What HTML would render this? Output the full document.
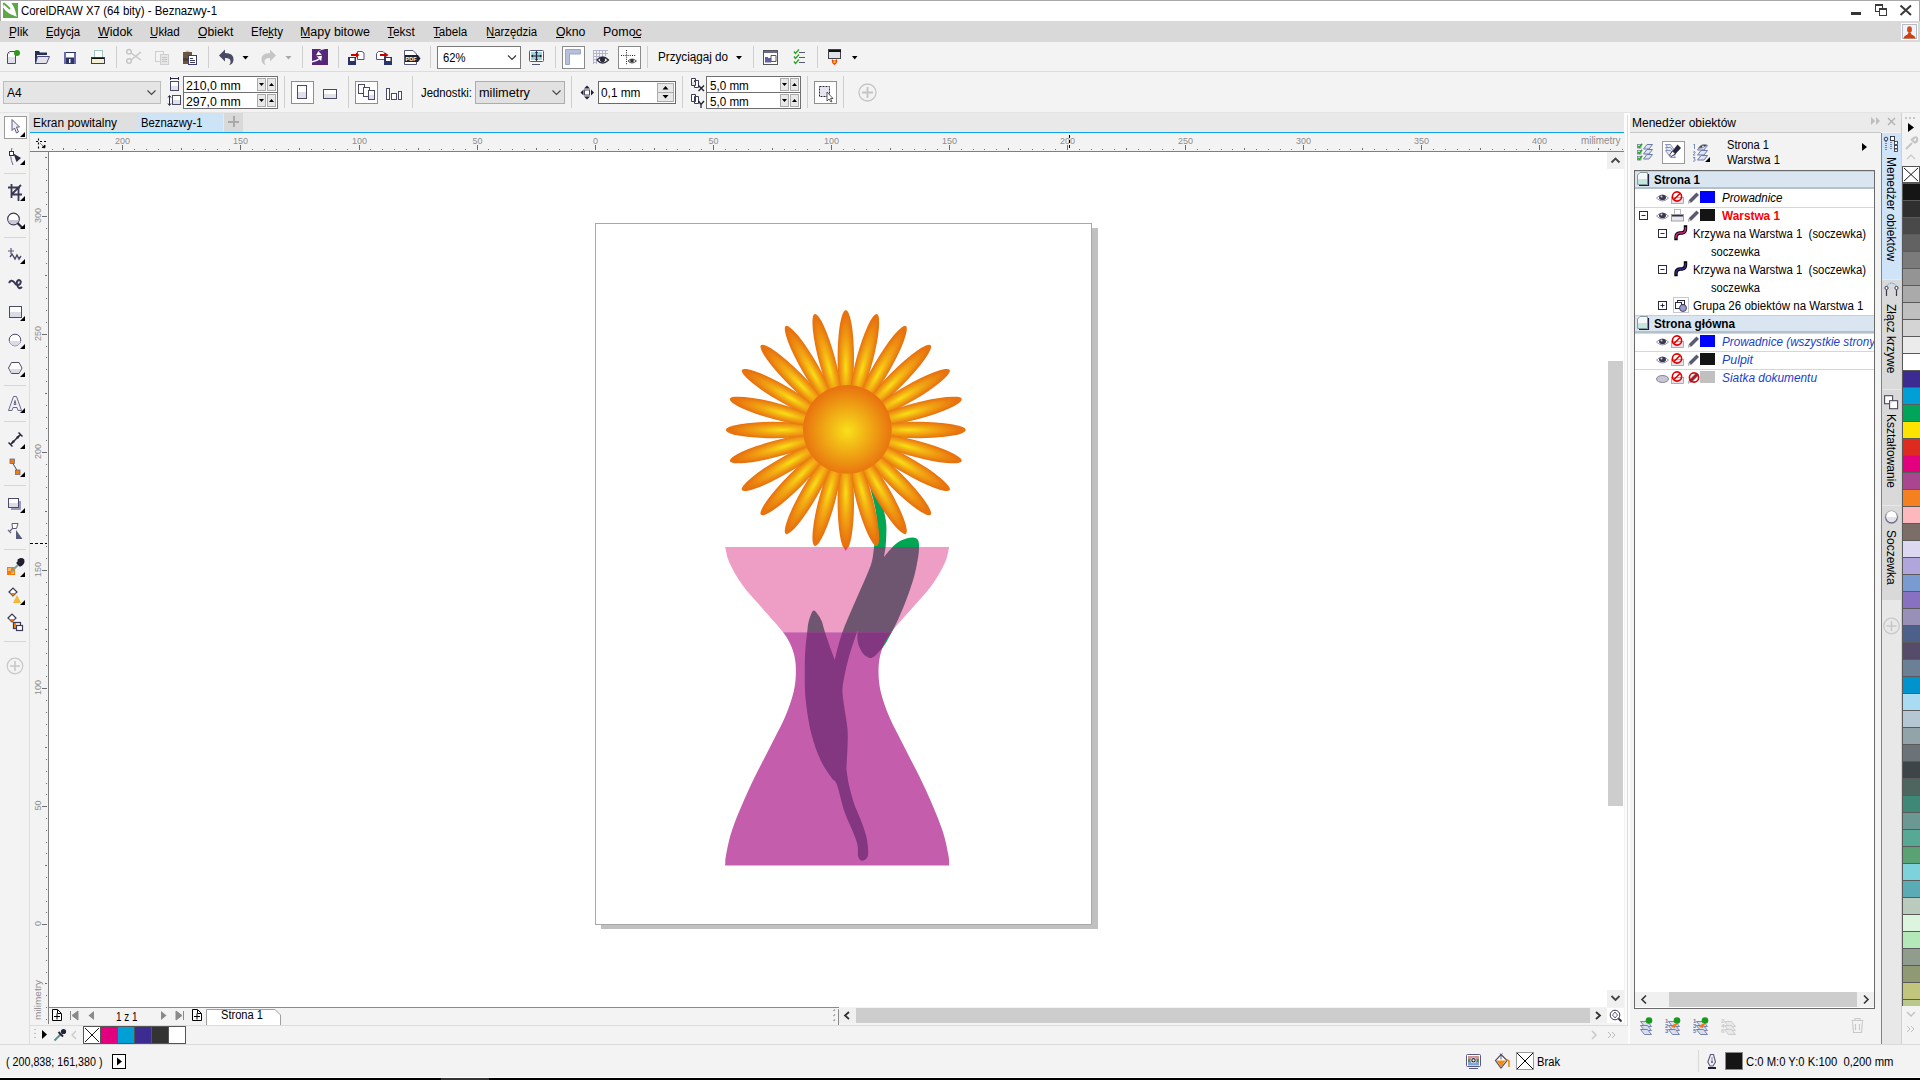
<!DOCTYPE html><html><head><meta charset="utf-8"><style>
*{margin:0;padding:0;box-sizing:border-box}
html,body{width:1920px;height:1080px;overflow:hidden;background:#f3f3f3;font-family:"Liberation Sans",sans-serif;position:relative}
.t{position:absolute;white-space:nowrap;line-height:1}
.a{position:absolute}
svg{position:absolute;overflow:visible}
</style></head><body><div style="position:absolute;left:0px;top:0px;width:1920px;height:21px;background:#fff;border-top:1px solid #a9a9a9"></div>
<div style="position:absolute;left:0px;top:0px;width:1px;height:21px;background:#a9a9a9"></div>
<svg style="left:3px;top:3px" width="15" height="15"><rect width="15" height="15" fill="#5aa846"/><path d="M0 4.5 L1 0 L8.5 0 Q11 4 12 7 L13.8 13.8 L7 11 Q3 9 0 4.5 Z" fill="#fff"/><path d="M1 0.5 L6.5 5.5" stroke="#5aa846" stroke-width="1.8" stroke-linecap="round"/><path d="M0 0 H1 L0 1 Z" fill="#5aa846"/></svg>
<div class="t" style="left:21px;top:5px;font-size:12px;color:#000;transform:scaleX(0.9532);transform-origin:0 0;">CorelDRAW X7 (64 bity) - Beznazwy-1</div>
<div style="position:absolute;left:1919px;top:0px;width:1px;height:21px;background:#a9a9a9"></div>
<div style="position:absolute;left:1851px;top:12px;width:10px;height:3px;background:#333"></div>
<svg style="left:1875px;top:4px" width="13" height="13"><rect x="0.5" y="0.5" width="7" height="7" fill="#fff" stroke="#3a3a3a"/><rect x="0" y="0" width="8" height="2" fill="#3a3a3a"/><rect x="4.5" y="4.5" width="7" height="7" fill="#fff" stroke="#3a3a3a"/><rect x="4" y="4" width="8" height="2" fill="#3a3a3a"/></svg>
<svg style="left:1899px;top:4px" width="14" height="12"><path d="M1.5 1.5 L12 11 M12 1.5 L1.5 11" stroke="#3a3a3a" stroke-width="2"/></svg>
<div style="position:absolute;left:0px;top:21px;width:1920px;height:21px;background:#d9d9d9"></div>
<div class="t" style="left:8.8px;top:26px;font-size:12px;color:#000;transform:scaleX(0.9981);transform-origin:0 0;">Plik</div>
<div class="t" style="left:45.5px;top:26px;font-size:12px;color:#000;transform:scaleX(0.9495);transform-origin:0 0;">Edycja</div>
<div class="t" style="left:97.5px;top:26px;font-size:12px;color:#000;transform:scaleX(1.0348);transform-origin:0 0;">Widok</div>
<div class="t" style="left:149.70000000000002px;top:26px;font-size:12px;color:#000;transform:scaleX(0.9681);transform-origin:0 0;">Układ</div>
<div class="t" style="left:197.5px;top:26px;font-size:12px;color:#000;transform:scaleX(1.0178);transform-origin:0 0;">Obiekt</div>
<div class="t" style="left:250.70000000000002px;top:26px;font-size:12px;color:#000;transform:scaleX(0.9626);transform-origin:0 0;">Efekty</div>
<div class="t" style="left:300.2px;top:26px;font-size:12px;color:#000;transform:scaleX(1.0376);transform-origin:0 0;">Mapy bitowe</div>
<div class="t" style="left:387.29999999999995px;top:26px;font-size:12px;color:#000;transform:scaleX(0.9890);transform-origin:0 0;">Tekst</div>
<div class="t" style="left:433.4px;top:26px;font-size:12px;color:#000;transform:scaleX(0.9700);transform-origin:0 0;">Tabela</div>
<div class="t" style="left:486.4px;top:26px;font-size:12px;color:#000;transform:scaleX(0.9440);transform-origin:0 0;">Narzędzia</div>
<div class="t" style="left:555.6px;top:26px;font-size:12px;color:#000;transform:scaleX(1.0250);transform-origin:0 0;">Okno</div>
<div class="t" style="left:602.6px;top:26px;font-size:12px;color:#000;transform:scaleX(1.0389);transform-origin:0 0;">Pomoc</div>
<div style="position:absolute;left:9px;top:37px;width:6px;height:1px;background:#000"></div>
<div style="position:absolute;left:46px;top:37px;width:7px;height:1px;background:#000"></div>
<div style="position:absolute;left:98px;top:37px;width:10px;height:1px;background:#000"></div>
<div style="position:absolute;left:150px;top:37px;width:7px;height:1px;background:#000"></div>
<div style="position:absolute;left:198px;top:37px;width:8px;height:1px;background:#000"></div>
<div style="position:absolute;left:268px;top:37px;width:5px;height:1px;background:#000"></div>
<div style="position:absolute;left:301px;top:37px;width:9px;height:1px;background:#000"></div>
<div style="position:absolute;left:388px;top:37px;width:6px;height:1px;background:#000"></div>
<div style="position:absolute;left:434px;top:37px;width:6px;height:1px;background:#000"></div>
<div style="position:absolute;left:487px;top:37px;width:8px;height:1px;background:#000"></div>
<div style="position:absolute;left:556px;top:37px;width:8px;height:1px;background:#000"></div>
<div style="position:absolute;left:633px;top:37px;width:8px;height:1px;background:#000"></div>
<svg style="left:1901px;top:23px" width="17" height="17"><rect x="0" y="0" width="17" height="17" fill="#fff"/><rect x="1.5" y="1.5" width="14" height="14" fill="#eef4fa" stroke="#b8bcc4"/><ellipse cx="8.5" cy="6.5" rx="2.4" ry="3.2" fill="#d64818"/><path d="M2.5 15.5 Q3 12.5 6.5 11.5 L7.5 9.5 H9.5 L10.5 11.5 Q14 12.5 14.5 15.5 Z" fill="#d04010"/></svg>
<div style="position:absolute;left:0px;top:42px;width:1920px;height:29px;background:#f3f3f3"></div>
<div style="position:absolute;left:0px;top:71px;width:1920px;height:1px;background:#dcdcdc"></div>
<div style="position:absolute;left:0px;top:72px;width:1920px;height:41px;background:#f3f3f3"></div>
<div style="position:absolute;left:0px;top:112px;width:1920px;height:1px;background:#e4e4e4"></div>
<div style="position:absolute;left:0px;top:113px;width:29px;height:932px;background:#f3f3f3"></div>
<div style="position:absolute;left:29px;top:113px;width:1px;height:932px;background:#dedede"></div>
<div style="position:absolute;left:30px;top:113px;width:1595px;height:19px;background:#e9e9e9"></div>
<div style="position:absolute;left:30px;top:113px;width:107px;height:19px;background:#dfdfdf"></div>
<div class="t" style="left:33px;top:117px;font-size:12px;color:#000;transform:scaleX(0.9916);transform-origin:0 0;">Ekran powitalny</div>
<div style="position:absolute;left:137px;top:113px;width:86px;height:19px;background:#cde4f7"></div>
<div class="t" style="left:141px;top:117px;font-size:12px;color:#000;transform:scaleX(0.9409);transform-origin:0 0;">Beznazwy-1</div>
<div style="position:absolute;left:224px;top:113px;width:19px;height:19px;background:#d9d9d9"></div>
<div style="position:absolute;left:228px;top:121px;width:11px;height:1.5px;background:#a9a9a9"></div>
<div style="position:absolute;left:233px;top:116px;width:1.5px;height:11px;background:#a9a9a9"></div>
<div style="position:absolute;left:30px;top:132px;width:1595px;height:1px;background:#0ba2ee"></div>
<div style="position:absolute;left:30px;top:133px;width:1594px;height:18px;background:#f3f3f3"></div>
<div style="position:absolute;left:30px;top:151px;width:1594px;height:1px;background:#7f7f7f"></div>
<div style="position:absolute;left:30px;top:152px;width:18px;height:872px;background:#f3f3f3"></div>
<div style="position:absolute;left:48px;top:152px;width:1px;height:872px;background:#7f7f7f"></div>
<div style="position:absolute;left:49px;top:152px;width:1575px;height:855px;background:#fff"></div>
<div style="position:absolute;left:49px;top:1007px;width:790px;height:1px;background:#8a8a8a"></div>
<svg style="left:0px;top:133px" width="1624" height="18"><rect x="52" y="16" width="1" height="1" fill="#6e6e6e"/><rect x="63" y="15" width="1" height="2" fill="#6e6e6e"/><rect x="75" y="16" width="1" height="1" fill="#6e6e6e"/><rect x="87" y="16" width="1" height="1" fill="#6e6e6e"/><rect x="99" y="16" width="1" height="1" fill="#6e6e6e"/><rect x="111" y="16" width="1" height="1" fill="#6e6e6e"/><rect x="122" y="12" width="1" height="5" fill="#6e6e6e"/><text x="115.0" y="11" font-size="9.6" fill="#8c8c8c" textLength="15" lengthAdjust="spacingAndGlyphs" font-family="Liberation Sans">200</text><rect x="134" y="16" width="1" height="1" fill="#6e6e6e"/><rect x="146" y="16" width="1" height="1" fill="#6e6e6e"/><rect x="158" y="16" width="1" height="1" fill="#6e6e6e"/><rect x="170" y="16" width="1" height="1" fill="#6e6e6e"/><rect x="181" y="15" width="1" height="2" fill="#6e6e6e"/><rect x="193" y="16" width="1" height="1" fill="#6e6e6e"/><rect x="205" y="16" width="1" height="1" fill="#6e6e6e"/><rect x="217" y="16" width="1" height="1" fill="#6e6e6e"/><rect x="229" y="16" width="1" height="1" fill="#6e6e6e"/><rect x="240" y="12" width="1" height="5" fill="#6e6e6e"/><text x="233.0" y="11" font-size="9.6" fill="#8c8c8c" textLength="15" lengthAdjust="spacingAndGlyphs" font-family="Liberation Sans">150</text><rect x="252" y="16" width="1" height="1" fill="#6e6e6e"/><rect x="264" y="16" width="1" height="1" fill="#6e6e6e"/><rect x="276" y="16" width="1" height="1" fill="#6e6e6e"/><rect x="288" y="16" width="1" height="1" fill="#6e6e6e"/><rect x="299" y="15" width="1" height="2" fill="#6e6e6e"/><rect x="311" y="16" width="1" height="1" fill="#6e6e6e"/><rect x="323" y="16" width="1" height="1" fill="#6e6e6e"/><rect x="335" y="16" width="1" height="1" fill="#6e6e6e"/><rect x="347" y="16" width="1" height="1" fill="#6e6e6e"/><rect x="359" y="12" width="1" height="5" fill="#6e6e6e"/><text x="352.0" y="11" font-size="9.6" fill="#8c8c8c" textLength="15" lengthAdjust="spacingAndGlyphs" font-family="Liberation Sans">100</text><rect x="370" y="16" width="1" height="1" fill="#6e6e6e"/><rect x="382" y="16" width="1" height="1" fill="#6e6e6e"/><rect x="394" y="16" width="1" height="1" fill="#6e6e6e"/><rect x="406" y="16" width="1" height="1" fill="#6e6e6e"/><rect x="418" y="15" width="1" height="2" fill="#6e6e6e"/><rect x="429" y="16" width="1" height="1" fill="#6e6e6e"/><rect x="441" y="16" width="1" height="1" fill="#6e6e6e"/><rect x="453" y="16" width="1" height="1" fill="#6e6e6e"/><rect x="465" y="16" width="1" height="1" fill="#6e6e6e"/><rect x="477" y="12" width="1" height="5" fill="#6e6e6e"/><text x="472.5" y="11" font-size="9.6" fill="#8c8c8c" textLength="10" lengthAdjust="spacingAndGlyphs" font-family="Liberation Sans">50</text><rect x="488" y="16" width="1" height="1" fill="#6e6e6e"/><rect x="500" y="16" width="1" height="1" fill="#6e6e6e"/><rect x="512" y="16" width="1" height="1" fill="#6e6e6e"/><rect x="524" y="16" width="1" height="1" fill="#6e6e6e"/><rect x="536" y="15" width="1" height="2" fill="#6e6e6e"/><rect x="547" y="16" width="1" height="1" fill="#6e6e6e"/><rect x="559" y="16" width="1" height="1" fill="#6e6e6e"/><rect x="571" y="16" width="1" height="1" fill="#6e6e6e"/><rect x="583" y="16" width="1" height="1" fill="#6e6e6e"/><rect x="595" y="12" width="1" height="5" fill="#6e6e6e"/><text x="593.0" y="11" font-size="9.6" fill="#8c8c8c" textLength="5" lengthAdjust="spacingAndGlyphs" font-family="Liberation Sans">0</text><rect x="607" y="16" width="1" height="1" fill="#6e6e6e"/><rect x="618" y="16" width="1" height="1" fill="#6e6e6e"/><rect x="630" y="16" width="1" height="1" fill="#6e6e6e"/><rect x="642" y="16" width="1" height="1" fill="#6e6e6e"/><rect x="654" y="15" width="1" height="2" fill="#6e6e6e"/><rect x="666" y="16" width="1" height="1" fill="#6e6e6e"/><rect x="677" y="16" width="1" height="1" fill="#6e6e6e"/><rect x="689" y="16" width="1" height="1" fill="#6e6e6e"/><rect x="701" y="16" width="1" height="1" fill="#6e6e6e"/><rect x="713" y="12" width="1" height="5" fill="#6e6e6e"/><text x="708.5" y="11" font-size="9.6" fill="#8c8c8c" textLength="10" lengthAdjust="spacingAndGlyphs" font-family="Liberation Sans">50</text><rect x="725" y="16" width="1" height="1" fill="#6e6e6e"/><rect x="736" y="16" width="1" height="1" fill="#6e6e6e"/><rect x="748" y="16" width="1" height="1" fill="#6e6e6e"/><rect x="760" y="16" width="1" height="1" fill="#6e6e6e"/><rect x="772" y="15" width="1" height="2" fill="#6e6e6e"/><rect x="784" y="16" width="1" height="1" fill="#6e6e6e"/><rect x="795" y="16" width="1" height="1" fill="#6e6e6e"/><rect x="807" y="16" width="1" height="1" fill="#6e6e6e"/><rect x="819" y="16" width="1" height="1" fill="#6e6e6e"/><rect x="831" y="12" width="1" height="5" fill="#6e6e6e"/><text x="824.0" y="11" font-size="9.6" fill="#8c8c8c" textLength="15" lengthAdjust="spacingAndGlyphs" font-family="Liberation Sans">100</text><rect x="843" y="16" width="1" height="1" fill="#6e6e6e"/><rect x="854" y="16" width="1" height="1" fill="#6e6e6e"/><rect x="866" y="16" width="1" height="1" fill="#6e6e6e"/><rect x="878" y="16" width="1" height="1" fill="#6e6e6e"/><rect x="890" y="15" width="1" height="2" fill="#6e6e6e"/><rect x="902" y="16" width="1" height="1" fill="#6e6e6e"/><rect x="914" y="16" width="1" height="1" fill="#6e6e6e"/><rect x="925" y="16" width="1" height="1" fill="#6e6e6e"/><rect x="937" y="16" width="1" height="1" fill="#6e6e6e"/><rect x="949" y="12" width="1" height="5" fill="#6e6e6e"/><text x="942.0" y="11" font-size="9.6" fill="#8c8c8c" textLength="15" lengthAdjust="spacingAndGlyphs" font-family="Liberation Sans">150</text><rect x="961" y="16" width="1" height="1" fill="#6e6e6e"/><rect x="973" y="16" width="1" height="1" fill="#6e6e6e"/><rect x="984" y="16" width="1" height="1" fill="#6e6e6e"/><rect x="996" y="16" width="1" height="1" fill="#6e6e6e"/><rect x="1008" y="15" width="1" height="2" fill="#6e6e6e"/><rect x="1020" y="16" width="1" height="1" fill="#6e6e6e"/><rect x="1032" y="16" width="1" height="1" fill="#6e6e6e"/><rect x="1043" y="16" width="1" height="1" fill="#6e6e6e"/><rect x="1055" y="16" width="1" height="1" fill="#6e6e6e"/><rect x="1067" y="12" width="1" height="5" fill="#6e6e6e"/><text x="1060.0" y="11" font-size="9.6" fill="#8c8c8c" textLength="15" lengthAdjust="spacingAndGlyphs" font-family="Liberation Sans">200</text><rect x="1079" y="16" width="1" height="1" fill="#6e6e6e"/><rect x="1091" y="16" width="1" height="1" fill="#6e6e6e"/><rect x="1102" y="16" width="1" height="1" fill="#6e6e6e"/><rect x="1114" y="16" width="1" height="1" fill="#6e6e6e"/><rect x="1126" y="15" width="1" height="2" fill="#6e6e6e"/><rect x="1138" y="16" width="1" height="1" fill="#6e6e6e"/><rect x="1150" y="16" width="1" height="1" fill="#6e6e6e"/><rect x="1162" y="16" width="1" height="1" fill="#6e6e6e"/><rect x="1173" y="16" width="1" height="1" fill="#6e6e6e"/><rect x="1185" y="12" width="1" height="5" fill="#6e6e6e"/><text x="1178.0" y="11" font-size="9.6" fill="#8c8c8c" textLength="15" lengthAdjust="spacingAndGlyphs" font-family="Liberation Sans">250</text><rect x="1197" y="16" width="1" height="1" fill="#6e6e6e"/><rect x="1209" y="16" width="1" height="1" fill="#6e6e6e"/><rect x="1221" y="16" width="1" height="1" fill="#6e6e6e"/><rect x="1232" y="16" width="1" height="1" fill="#6e6e6e"/><rect x="1244" y="15" width="1" height="2" fill="#6e6e6e"/><rect x="1256" y="16" width="1" height="1" fill="#6e6e6e"/><rect x="1268" y="16" width="1" height="1" fill="#6e6e6e"/><rect x="1280" y="16" width="1" height="1" fill="#6e6e6e"/><rect x="1291" y="16" width="1" height="1" fill="#6e6e6e"/><rect x="1303" y="12" width="1" height="5" fill="#6e6e6e"/><text x="1296.0" y="11" font-size="9.6" fill="#8c8c8c" textLength="15" lengthAdjust="spacingAndGlyphs" font-family="Liberation Sans">300</text><rect x="1315" y="16" width="1" height="1" fill="#6e6e6e"/><rect x="1327" y="16" width="1" height="1" fill="#6e6e6e"/><rect x="1339" y="16" width="1" height="1" fill="#6e6e6e"/><rect x="1350" y="16" width="1" height="1" fill="#6e6e6e"/><rect x="1362" y="15" width="1" height="2" fill="#6e6e6e"/><rect x="1374" y="16" width="1" height="1" fill="#6e6e6e"/><rect x="1386" y="16" width="1" height="1" fill="#6e6e6e"/><rect x="1398" y="16" width="1" height="1" fill="#6e6e6e"/><rect x="1409" y="16" width="1" height="1" fill="#6e6e6e"/><rect x="1421" y="12" width="1" height="5" fill="#6e6e6e"/><text x="1414.0" y="11" font-size="9.6" fill="#8c8c8c" textLength="15" lengthAdjust="spacingAndGlyphs" font-family="Liberation Sans">350</text><rect x="1433" y="16" width="1" height="1" fill="#6e6e6e"/><rect x="1445" y="16" width="1" height="1" fill="#6e6e6e"/><rect x="1457" y="16" width="1" height="1" fill="#6e6e6e"/><rect x="1469" y="16" width="1" height="1" fill="#6e6e6e"/><rect x="1480" y="15" width="1" height="2" fill="#6e6e6e"/><rect x="1492" y="16" width="1" height="1" fill="#6e6e6e"/><rect x="1504" y="16" width="1" height="1" fill="#6e6e6e"/><rect x="1516" y="16" width="1" height="1" fill="#6e6e6e"/><rect x="1528" y="16" width="1" height="1" fill="#6e6e6e"/><rect x="1539" y="12" width="1" height="5" fill="#6e6e6e"/><text x="1532.0" y="11" font-size="9.6" fill="#8c8c8c" textLength="15" lengthAdjust="spacingAndGlyphs" font-family="Liberation Sans">400</text><rect x="1551" y="16" width="1" height="1" fill="#6e6e6e"/><rect x="1563" y="16" width="1" height="1" fill="#6e6e6e"/><rect x="1575" y="16" width="1" height="1" fill="#6e6e6e"/><rect x="1587" y="16" width="1" height="1" fill="#6e6e6e"/><rect x="1598" y="15" width="1" height="2" fill="#6e6e6e"/><rect x="1610" y="16" width="1" height="1" fill="#6e6e6e"/><rect x="1622" y="16" width="1" height="1" fill="#6e6e6e"/><text x="1581" y="11" font-size="10" fill="#8c8c8c" textLength="39.5" lengthAdjust="spacingAndGlyphs" font-family="Liberation Sans">milimetry</text><path d="M1069.5 2 V17" stroke="#000" stroke-width="1" stroke-dasharray="3,2"/></svg>
<svg style="left:30px;top:132px" width="20" height="20"><path d="M8.5 6.5 V8.5 M8.5 10.5 V12.5 M8.5 14.5 V16.5 M6 9.5 H8 M10 9.5 H12 M14 9.5 H16" stroke="#000" stroke-width="1.1"/><path d="M10.5 11.5 L13.5 14.5" stroke="#000" stroke-width="0.9" stroke-dasharray="1,0.6"/><path d="M12 15.5 L15 13 V15.8 Z" fill="#000" stroke="#000" stroke-width="0.8"/></svg>
<svg style="left:30px;top:0px" width="18" height="1008"><rect x="16" y="1019" width="1" height="1" fill="#6e6e6e"/><rect x="16" y="1007" width="1" height="1" fill="#6e6e6e"/><rect x="16" y="995" width="1" height="1" fill="#6e6e6e"/><rect x="15" y="983" width="2" height="1" fill="#6e6e6e"/><rect x="16" y="972" width="1" height="1" fill="#6e6e6e"/><rect x="16" y="960" width="1" height="1" fill="#6e6e6e"/><rect x="16" y="948" width="1" height="1" fill="#6e6e6e"/><rect x="16" y="936" width="1" height="1" fill="#6e6e6e"/><rect x="12" y="924" width="5" height="1" fill="#6e6e6e"/><text transform="translate(11,923.5) rotate(-90)" x="-2.5" y="0" font-size="9.6" fill="#8c8c8c" textLength="5" lengthAdjust="spacingAndGlyphs" font-family="Liberation Sans">0</text><rect x="16" y="912" width="1" height="1" fill="#6e6e6e"/><rect x="16" y="901" width="1" height="1" fill="#6e6e6e"/><rect x="16" y="889" width="1" height="1" fill="#6e6e6e"/><rect x="16" y="877" width="1" height="1" fill="#6e6e6e"/><rect x="15" y="865" width="2" height="1" fill="#6e6e6e"/><rect x="16" y="853" width="1" height="1" fill="#6e6e6e"/><rect x="16" y="842" width="1" height="1" fill="#6e6e6e"/><rect x="16" y="830" width="1" height="1" fill="#6e6e6e"/><rect x="16" y="818" width="1" height="1" fill="#6e6e6e"/><rect x="12" y="806" width="5" height="1" fill="#6e6e6e"/><text transform="translate(11,805.5) rotate(-90)" x="-5.0" y="0" font-size="9.6" fill="#8c8c8c" textLength="10" lengthAdjust="spacingAndGlyphs" font-family="Liberation Sans">50</text><rect x="16" y="794" width="1" height="1" fill="#6e6e6e"/><rect x="16" y="783" width="1" height="1" fill="#6e6e6e"/><rect x="16" y="771" width="1" height="1" fill="#6e6e6e"/><rect x="16" y="759" width="1" height="1" fill="#6e6e6e"/><rect x="15" y="747" width="2" height="1" fill="#6e6e6e"/><rect x="16" y="735" width="1" height="1" fill="#6e6e6e"/><rect x="16" y="724" width="1" height="1" fill="#6e6e6e"/><rect x="16" y="712" width="1" height="1" fill="#6e6e6e"/><rect x="16" y="700" width="1" height="1" fill="#6e6e6e"/><rect x="12" y="688" width="5" height="1" fill="#6e6e6e"/><text transform="translate(11,687.5) rotate(-90)" x="-7.5" y="0" font-size="9.6" fill="#8c8c8c" textLength="15" lengthAdjust="spacingAndGlyphs" font-family="Liberation Sans">100</text><rect x="16" y="676" width="1" height="1" fill="#6e6e6e"/><rect x="16" y="665" width="1" height="1" fill="#6e6e6e"/><rect x="16" y="653" width="1" height="1" fill="#6e6e6e"/><rect x="16" y="641" width="1" height="1" fill="#6e6e6e"/><rect x="15" y="629" width="2" height="1" fill="#6e6e6e"/><rect x="16" y="617" width="1" height="1" fill="#6e6e6e"/><rect x="16" y="605" width="1" height="1" fill="#6e6e6e"/><rect x="16" y="594" width="1" height="1" fill="#6e6e6e"/><rect x="16" y="582" width="1" height="1" fill="#6e6e6e"/><rect x="12" y="570" width="5" height="1" fill="#6e6e6e"/><text transform="translate(11,569.5) rotate(-90)" x="-7.5" y="0" font-size="9.6" fill="#8c8c8c" textLength="15" lengthAdjust="spacingAndGlyphs" font-family="Liberation Sans">150</text><rect x="16" y="558" width="1" height="1" fill="#6e6e6e"/><rect x="16" y="546" width="1" height="1" fill="#6e6e6e"/><rect x="16" y="535" width="1" height="1" fill="#6e6e6e"/><rect x="16" y="523" width="1" height="1" fill="#6e6e6e"/><rect x="15" y="511" width="2" height="1" fill="#6e6e6e"/><rect x="16" y="499" width="1" height="1" fill="#6e6e6e"/><rect x="16" y="487" width="1" height="1" fill="#6e6e6e"/><rect x="16" y="476" width="1" height="1" fill="#6e6e6e"/><rect x="16" y="464" width="1" height="1" fill="#6e6e6e"/><rect x="12" y="452" width="5" height="1" fill="#6e6e6e"/><text transform="translate(11,451.5) rotate(-90)" x="-7.5" y="0" font-size="9.6" fill="#8c8c8c" textLength="15" lengthAdjust="spacingAndGlyphs" font-family="Liberation Sans">200</text><rect x="16" y="440" width="1" height="1" fill="#6e6e6e"/><rect x="16" y="428" width="1" height="1" fill="#6e6e6e"/><rect x="16" y="417" width="1" height="1" fill="#6e6e6e"/><rect x="16" y="405" width="1" height="1" fill="#6e6e6e"/><rect x="15" y="393" width="2" height="1" fill="#6e6e6e"/><rect x="16" y="381" width="1" height="1" fill="#6e6e6e"/><rect x="16" y="369" width="1" height="1" fill="#6e6e6e"/><rect x="16" y="357" width="1" height="1" fill="#6e6e6e"/><rect x="16" y="346" width="1" height="1" fill="#6e6e6e"/><rect x="12" y="334" width="5" height="1" fill="#6e6e6e"/><text transform="translate(11,333.5) rotate(-90)" x="-7.5" y="0" font-size="9.6" fill="#8c8c8c" textLength="15" lengthAdjust="spacingAndGlyphs" font-family="Liberation Sans">250</text><rect x="16" y="322" width="1" height="1" fill="#6e6e6e"/><rect x="16" y="310" width="1" height="1" fill="#6e6e6e"/><rect x="16" y="298" width="1" height="1" fill="#6e6e6e"/><rect x="16" y="287" width="1" height="1" fill="#6e6e6e"/><rect x="15" y="275" width="2" height="1" fill="#6e6e6e"/><rect x="16" y="263" width="1" height="1" fill="#6e6e6e"/><rect x="16" y="251" width="1" height="1" fill="#6e6e6e"/><rect x="16" y="239" width="1" height="1" fill="#6e6e6e"/><rect x="16" y="228" width="1" height="1" fill="#6e6e6e"/><rect x="12" y="216" width="5" height="1" fill="#6e6e6e"/><text transform="translate(11,215.5) rotate(-90)" x="-7.5" y="0" font-size="9.6" fill="#8c8c8c" textLength="15" lengthAdjust="spacingAndGlyphs" font-family="Liberation Sans">300</text><rect x="16" y="204" width="1" height="1" fill="#6e6e6e"/><rect x="16" y="192" width="1" height="1" fill="#6e6e6e"/><rect x="16" y="180" width="1" height="1" fill="#6e6e6e"/><rect x="16" y="169" width="1" height="1" fill="#6e6e6e"/><rect x="15" y="157" width="2" height="1" fill="#6e6e6e"/><text transform="translate(11,1020) rotate(-90)" font-size="9.6" fill="#8c8c8c" textLength="40" lengthAdjust="spacingAndGlyphs" font-family="Liberation Sans">milimetry</text><path d="M0 543.5 H17" stroke="#000" stroke-width="1" stroke-dasharray="3,2"/></svg>
<svg style="left:0;top:0" width="1920" height="1080"><defs><radialGradient id="pg" cx="0.5" cy="0.55" r="0.5" fx="0.5" fy="0.6"><stop offset="0" stop-color="#f9e014"/><stop offset="0.45" stop-color="#f2a913"/><stop offset="1" stop-color="#e8720e"/></radialGradient><radialGradient id="cg" cx="847.4" cy="431" r="45" gradientUnits="userSpaceOnUse"><stop offset="0" stop-color="#f8e01a"/><stop offset="1" stop-color="#e8720f"/></radialGradient><clipPath id="ctop"><rect x="600" y="540" width="400" height="92.2"/></clipPath><clipPath id="cbot"><rect x="600" y="632.2" width="400" height="300"/></clipPath><clipPath id="cvase"><path d="M725.2,546.9 C725.9,549.5 726.5,556.0 729.4,562.4 C732.3,568.8 737.0,577.5 742.4,585.1 C747.8,592.7 755.1,600.0 761.9,607.8 C768.6,615.6 777.8,625.1 782.9,632.1 C788.0,639.1 790.5,643.7 792.7,649.9 C794.9,656.1 795.8,662.4 795.9,669.4 C796.0,676.4 795.5,684.0 793.6,692.1 C791.7,700.2 788.8,708.3 784.6,718.0 C780.4,727.7 774.2,738.5 768.3,750.4 C762.3,762.3 754.8,776.3 748.9,789.3 C743.0,802.3 736.5,817.4 732.7,828.2 C728.9,839.0 727.5,847.9 726.2,854.1 C725.0,860.3 725.4,863.6 725.2,865.5 C762.5,865.5 911.9,865.5 949.2,865.5 C949.0,863.6 949.5,860.3 948.2,854.1 C947.0,847.9 945.5,839.0 941.7,828.2 C937.9,817.4 931.4,802.3 925.5,789.3 C919.6,776.3 912.1,762.3 906.1,750.4 C900.2,738.5 894.0,727.7 889.8,718.0 C885.6,708.3 882.7,700.2 880.8,692.1 C878.9,684.0 878.4,676.4 878.5,669.4 C878.7,662.4 879.5,656.1 881.7,649.9 C883.9,643.7 886.4,639.1 891.5,632.1 C896.6,625.1 905.8,615.6 912.5,607.8 C919.3,600.0 926.6,592.7 932.0,585.1 C937.4,577.5 942.1,568.8 945.0,562.4 C947.9,556.0 948.5,549.5 949.2,546.9 C911.9,546.9 762.5,546.9 725.2,546.9 Z"/></clipPath></defs><rect x="1092" y="228" width="6" height="701" fill="#c0c0c0"/><rect x="601" y="925" width="497" height="4" fill="#c0c0c0"/><rect x="595.5" y="223.5" width="496" height="701" fill="#fff" stroke="#a8a8a8" stroke-width="1"/><path d="M866.0,470.0 C866.8,473.5 869.4,484.3 871.0,491.0 C872.6,497.7 874.5,504.3 875.5,510.0 C876.5,515.7 876.9,520.8 877.0,525.0 C877.1,529.2 876.5,531.4 876.0,535.0 C875.5,538.6 874.7,542.5 874.1,546.7 C873.5,550.9 873.2,555.6 872.2,560.0 C871.2,564.4 870.7,565.7 867.8,572.8 C864.9,579.9 859.1,592.5 854.8,602.6 C850.5,612.8 845.2,624.1 841.9,633.7 C838.5,643.3 835.9,655.6 834.7,660.0 C834.1,658.3 832.7,654.6 831.1,650.0 C829.5,645.4 826.6,637.0 825.0,632.2 C823.4,627.4 822.9,624.1 821.7,621.1 C820.5,618.1 819.1,616.1 817.8,614.4 C816.4,612.6 814.8,610.4 813.6,610.6 C812.4,610.8 811.5,613.5 810.6,615.6 C809.7,617.7 808.9,620.5 808.3,623.3 C807.7,626.1 807.7,627.8 807.2,632.2 C806.7,636.7 805.7,643.7 805.3,650.0 C804.9,656.3 804.8,661.8 804.8,670.0 C804.8,678.2 804.5,688.3 805.6,699.0 C806.7,709.7 808.8,723.7 811.4,734.0 C814.0,744.3 817.4,753.4 821.0,761.0 C824.6,768.6 830.8,776.5 832.8,779.6 C833.5,780.5 835.0,779.6 837.0,785.0 C839.0,790.4 841.8,804.0 844.5,811.8 C847.2,819.6 850.8,826.5 853.0,832.0 C855.2,837.5 856.6,840.9 857.5,845.0 C858.4,849.1 857.4,853.9 858.1,856.5 C858.9,859.1 860.4,860.7 862.0,860.8 C863.6,860.9 866.5,859.1 867.5,857.0 C868.5,854.9 868.3,851.7 868.0,848.0 C867.7,844.3 867.2,840.0 865.9,835.0 C864.6,830.0 862.0,823.2 860.0,818.0 C858.0,812.8 856.0,809.5 854.2,804.0 C852.4,798.5 850.3,790.8 849.0,785.0 C847.7,779.2 846.8,771.7 846.4,769.0 C846.6,765.0 847.4,751.8 847.6,745.0 C847.8,738.2 848.0,734.7 847.4,728.0 C846.8,721.3 844.8,711.5 844.0,705.0 C843.2,698.5 842.2,694.8 842.5,689.0 C842.8,683.2 844.3,676.5 845.7,670.0 C847.1,663.5 849.0,656.5 851.0,650.0 C853.0,643.5 856.3,634.2 857.4,631.1 C857.5,633.1 857.1,639.4 858.0,643.0 C858.9,646.6 860.8,650.5 862.6,653.0 C864.4,655.5 867.0,657.1 869.0,657.7 C871.0,658.3 872.5,657.6 874.3,656.4 C876.1,655.2 878.0,652.8 880.0,650.5 C882.0,648.2 883.3,647.3 886.0,642.8 C888.7,638.3 892.8,630.6 896.3,623.3 C899.8,615.9 903.7,606.7 906.7,598.7 C909.7,590.7 912.5,582.5 914.4,575.4 C916.3,568.3 917.5,561.1 918.3,556.0 C919.1,550.9 919.1,547.8 919.0,545.0 C918.9,542.2 918.4,540.6 917.4,539.3 C916.4,538.0 914.9,537.5 913.0,537.4 C911.1,537.3 908.8,537.7 906.3,538.5 C903.8,539.3 900.6,540.5 898.0,542.2 C895.4,543.9 893.0,546.4 890.7,548.9 C888.4,551.4 885.1,555.6 884.0,557.0 C884.3,555.3 885.2,550.3 885.6,546.7 C886.0,543.1 886.2,539.3 886.3,535.6 C886.4,531.9 886.5,527.9 886.3,524.4 C886.0,520.9 885.7,519.4 884.8,514.8 C883.9,510.2 882.8,504.5 881.0,497.0 C879.2,489.5 875.2,474.5 874.0,470.0 C872.7,470.0 867.3,470.0 866.0,470.0 Z" fill="#00a651"/><g transform="translate(845.8,430) rotate(0)"><ellipse cx="0" cy="-72" rx="8.2" ry="48" fill="url(#pg)"/></g><g transform="translate(845.8,430) rotate(15)"><ellipse cx="0" cy="-72" rx="8.2" ry="48" fill="url(#pg)"/></g><g transform="translate(845.8,430) rotate(30)"><ellipse cx="0" cy="-72" rx="8.2" ry="48" fill="url(#pg)"/></g><g transform="translate(845.8,430) rotate(45)"><ellipse cx="0" cy="-72" rx="8.2" ry="48" fill="url(#pg)"/></g><g transform="translate(845.8,430) rotate(60)"><ellipse cx="0" cy="-72" rx="8.2" ry="48" fill="url(#pg)"/></g><g transform="translate(845.8,430) rotate(75)"><ellipse cx="0" cy="-72" rx="8.2" ry="48" fill="url(#pg)"/></g><g transform="translate(845.8,430) rotate(90)"><ellipse cx="0" cy="-72" rx="8.2" ry="48" fill="url(#pg)"/></g><g transform="translate(845.8,430) rotate(105)"><ellipse cx="0" cy="-72" rx="8.2" ry="48" fill="url(#pg)"/></g><g transform="translate(845.8,430) rotate(120)"><ellipse cx="0" cy="-72" rx="8.2" ry="48" fill="url(#pg)"/></g><g transform="translate(845.8,430) rotate(135)"><ellipse cx="0" cy="-72" rx="8.2" ry="48" fill="url(#pg)"/></g><g transform="translate(845.8,430) rotate(150)"><ellipse cx="0" cy="-72" rx="8.2" ry="48" fill="url(#pg)"/></g><g transform="translate(845.8,430) rotate(165)"><ellipse cx="0" cy="-72" rx="8.2" ry="48" fill="url(#pg)"/></g><g transform="translate(845.8,430) rotate(180)"><ellipse cx="0" cy="-72" rx="8.2" ry="48" fill="url(#pg)"/></g><g transform="translate(845.8,430) rotate(195)"><ellipse cx="0" cy="-72" rx="8.2" ry="48" fill="url(#pg)"/></g><g transform="translate(845.8,430) rotate(210)"><ellipse cx="0" cy="-72" rx="8.2" ry="48" fill="url(#pg)"/></g><g transform="translate(845.8,430) rotate(225)"><ellipse cx="0" cy="-72" rx="8.2" ry="48" fill="url(#pg)"/></g><g transform="translate(845.8,430) rotate(240)"><ellipse cx="0" cy="-72" rx="8.2" ry="48" fill="url(#pg)"/></g><g transform="translate(845.8,430) rotate(255)"><ellipse cx="0" cy="-72" rx="8.2" ry="48" fill="url(#pg)"/></g><g transform="translate(845.8,430) rotate(270)"><ellipse cx="0" cy="-72" rx="8.2" ry="48" fill="url(#pg)"/></g><g transform="translate(845.8,430) rotate(285)"><ellipse cx="0" cy="-72" rx="8.2" ry="48" fill="url(#pg)"/></g><g transform="translate(845.8,430) rotate(300)"><ellipse cx="0" cy="-72" rx="8.2" ry="48" fill="url(#pg)"/></g><g transform="translate(845.8,430) rotate(315)"><ellipse cx="0" cy="-72" rx="8.2" ry="48" fill="url(#pg)"/></g><g transform="translate(845.8,430) rotate(330)"><ellipse cx="0" cy="-72" rx="8.2" ry="48" fill="url(#pg)"/></g><g transform="translate(845.8,430) rotate(345)"><ellipse cx="0" cy="-72" rx="8.2" ry="48" fill="url(#pg)"/></g><circle cx="847.4" cy="429.4" r="44.4" fill="url(#cg)"/><g clip-path="url(#cvase)"><rect x="700" y="540" width="280" height="92.2" fill="#ee9ec5"/><rect x="700" y="632.2" width="280" height="240" fill="#c45eac"/><path d="M866.0,470.0 C866.8,473.5 869.4,484.3 871.0,491.0 C872.6,497.7 874.5,504.3 875.5,510.0 C876.5,515.7 876.9,520.8 877.0,525.0 C877.1,529.2 876.5,531.4 876.0,535.0 C875.5,538.6 874.7,542.5 874.1,546.7 C873.5,550.9 873.2,555.6 872.2,560.0 C871.2,564.4 870.7,565.7 867.8,572.8 C864.9,579.9 859.1,592.5 854.8,602.6 C850.5,612.8 845.2,624.1 841.9,633.7 C838.5,643.3 835.9,655.6 834.7,660.0 C834.1,658.3 832.7,654.6 831.1,650.0 C829.5,645.4 826.6,637.0 825.0,632.2 C823.4,627.4 822.9,624.1 821.7,621.1 C820.5,618.1 819.1,616.1 817.8,614.4 C816.4,612.6 814.8,610.4 813.6,610.6 C812.4,610.8 811.5,613.5 810.6,615.6 C809.7,617.7 808.9,620.5 808.3,623.3 C807.7,626.1 807.7,627.8 807.2,632.2 C806.7,636.7 805.7,643.7 805.3,650.0 C804.9,656.3 804.8,661.8 804.8,670.0 C804.8,678.2 804.5,688.3 805.6,699.0 C806.7,709.7 808.8,723.7 811.4,734.0 C814.0,744.3 817.4,753.4 821.0,761.0 C824.6,768.6 830.8,776.5 832.8,779.6 C833.5,780.5 835.0,779.6 837.0,785.0 C839.0,790.4 841.8,804.0 844.5,811.8 C847.2,819.6 850.8,826.5 853.0,832.0 C855.2,837.5 856.6,840.9 857.5,845.0 C858.4,849.1 857.4,853.9 858.1,856.5 C858.9,859.1 860.4,860.7 862.0,860.8 C863.6,860.9 866.5,859.1 867.5,857.0 C868.5,854.9 868.3,851.7 868.0,848.0 C867.7,844.3 867.2,840.0 865.9,835.0 C864.6,830.0 862.0,823.2 860.0,818.0 C858.0,812.8 856.0,809.5 854.2,804.0 C852.4,798.5 850.3,790.8 849.0,785.0 C847.7,779.2 846.8,771.7 846.4,769.0 C846.6,765.0 847.4,751.8 847.6,745.0 C847.8,738.2 848.0,734.7 847.4,728.0 C846.8,721.3 844.8,711.5 844.0,705.0 C843.2,698.5 842.2,694.8 842.5,689.0 C842.8,683.2 844.3,676.5 845.7,670.0 C847.1,663.5 849.0,656.5 851.0,650.0 C853.0,643.5 856.3,634.2 857.4,631.1 C857.5,633.1 857.1,639.4 858.0,643.0 C858.9,646.6 860.8,650.5 862.6,653.0 C864.4,655.5 867.0,657.1 869.0,657.7 C871.0,658.3 872.5,657.6 874.3,656.4 C876.1,655.2 878.0,652.8 880.0,650.5 C882.0,648.2 883.3,647.3 886.0,642.8 C888.7,638.3 892.8,630.6 896.3,623.3 C899.8,615.9 903.7,606.7 906.7,598.7 C909.7,590.7 912.5,582.5 914.4,575.4 C916.3,568.3 917.5,561.1 918.3,556.0 C919.1,550.9 919.1,547.8 919.0,545.0 C918.9,542.2 918.4,540.6 917.4,539.3 C916.4,538.0 914.9,537.5 913.0,537.4 C911.1,537.3 908.8,537.7 906.3,538.5 C903.8,539.3 900.6,540.5 898.0,542.2 C895.4,543.9 893.0,546.4 890.7,548.9 C888.4,551.4 885.1,555.6 884.0,557.0 C884.3,555.3 885.2,550.3 885.6,546.7 C886.0,543.1 886.2,539.3 886.3,535.6 C886.4,531.9 886.5,527.9 886.3,524.4 C886.0,520.9 885.7,519.4 884.8,514.8 C883.9,510.2 882.8,504.5 881.0,497.0 C879.2,489.5 875.2,474.5 874.0,470.0 C872.7,470.0 867.3,470.0 866.0,470.0 Z" fill="#6f5670" clip-path="url(#ctop)"/><path d="M866.0,470.0 C866.8,473.5 869.4,484.3 871.0,491.0 C872.6,497.7 874.5,504.3 875.5,510.0 C876.5,515.7 876.9,520.8 877.0,525.0 C877.1,529.2 876.5,531.4 876.0,535.0 C875.5,538.6 874.7,542.5 874.1,546.7 C873.5,550.9 873.2,555.6 872.2,560.0 C871.2,564.4 870.7,565.7 867.8,572.8 C864.9,579.9 859.1,592.5 854.8,602.6 C850.5,612.8 845.2,624.1 841.9,633.7 C838.5,643.3 835.9,655.6 834.7,660.0 C834.1,658.3 832.7,654.6 831.1,650.0 C829.5,645.4 826.6,637.0 825.0,632.2 C823.4,627.4 822.9,624.1 821.7,621.1 C820.5,618.1 819.1,616.1 817.8,614.4 C816.4,612.6 814.8,610.4 813.6,610.6 C812.4,610.8 811.5,613.5 810.6,615.6 C809.7,617.7 808.9,620.5 808.3,623.3 C807.7,626.1 807.7,627.8 807.2,632.2 C806.7,636.7 805.7,643.7 805.3,650.0 C804.9,656.3 804.8,661.8 804.8,670.0 C804.8,678.2 804.5,688.3 805.6,699.0 C806.7,709.7 808.8,723.7 811.4,734.0 C814.0,744.3 817.4,753.4 821.0,761.0 C824.6,768.6 830.8,776.5 832.8,779.6 C833.5,780.5 835.0,779.6 837.0,785.0 C839.0,790.4 841.8,804.0 844.5,811.8 C847.2,819.6 850.8,826.5 853.0,832.0 C855.2,837.5 856.6,840.9 857.5,845.0 C858.4,849.1 857.4,853.9 858.1,856.5 C858.9,859.1 860.4,860.7 862.0,860.8 C863.6,860.9 866.5,859.1 867.5,857.0 C868.5,854.9 868.3,851.7 868.0,848.0 C867.7,844.3 867.2,840.0 865.9,835.0 C864.6,830.0 862.0,823.2 860.0,818.0 C858.0,812.8 856.0,809.5 854.2,804.0 C852.4,798.5 850.3,790.8 849.0,785.0 C847.7,779.2 846.8,771.7 846.4,769.0 C846.6,765.0 847.4,751.8 847.6,745.0 C847.8,738.2 848.0,734.7 847.4,728.0 C846.8,721.3 844.8,711.5 844.0,705.0 C843.2,698.5 842.2,694.8 842.5,689.0 C842.8,683.2 844.3,676.5 845.7,670.0 C847.1,663.5 849.0,656.5 851.0,650.0 C853.0,643.5 856.3,634.2 857.4,631.1 C857.5,633.1 857.1,639.4 858.0,643.0 C858.9,646.6 860.8,650.5 862.6,653.0 C864.4,655.5 867.0,657.1 869.0,657.7 C871.0,658.3 872.5,657.6 874.3,656.4 C876.1,655.2 878.0,652.8 880.0,650.5 C882.0,648.2 883.3,647.3 886.0,642.8 C888.7,638.3 892.8,630.6 896.3,623.3 C899.8,615.9 903.7,606.7 906.7,598.7 C909.7,590.7 912.5,582.5 914.4,575.4 C916.3,568.3 917.5,561.1 918.3,556.0 C919.1,550.9 919.1,547.8 919.0,545.0 C918.9,542.2 918.4,540.6 917.4,539.3 C916.4,538.0 914.9,537.5 913.0,537.4 C911.1,537.3 908.8,537.7 906.3,538.5 C903.8,539.3 900.6,540.5 898.0,542.2 C895.4,543.9 893.0,546.4 890.7,548.9 C888.4,551.4 885.1,555.6 884.0,557.0 C884.3,555.3 885.2,550.3 885.6,546.7 C886.0,543.1 886.2,539.3 886.3,535.6 C886.4,531.9 886.5,527.9 886.3,524.4 C886.0,520.9 885.7,519.4 884.8,514.8 C883.9,510.2 882.8,504.5 881.0,497.0 C879.2,489.5 875.2,474.5 874.0,470.0 C872.7,470.0 867.3,470.0 866.0,470.0 Z" fill="#833780" clip-path="url(#cbot)"/></g><path d="M843.5 547 L845.7 551 L848 547 Z" fill="#e8445a"/></svg>
<svg style="left:0;top:0" width="900" height="72"><path d="M9.5 51.5 H15.5 V63.5 H7.5 V53.5 Z" fill="#fff" stroke="#4a4a6e"/><rect x="8" y="57" width="7" height="6" fill="#dfe0ea"/><path d="M7.5 53.5 H9.5 V51.5" fill="none" stroke="#8fc9c0"/><circle cx="17" cy="53" r="3" fill="#2e9a1a"/><path d="M35 51 H39 L40 52.5 H47 V55 H35 Z" fill="#262e5a"/><rect x="35" y="52" width="2" height="12" fill="#262e5a"/><path d="M37.5 56.5 H49.5 L46.5 63.5 H35.5 Z" fill="#e2e3ec" stroke="#4a4a7a"/><rect x="64" y="52" width="12" height="12" fill="#2a3468"/><rect x="64" y="52" width="2" height="12" fill="#6c6caa"/><rect x="74" y="53" width="2" height="11" fill="#6c6caa"/><rect x="66" y="53" width="8" height="4.5" fill="#fff"/><rect x="69" y="59" width="1.5" height="4" fill="#fff"/><rect x="94.5" y="50.5" width="8" height="8" fill="#fff" stroke="#9cc8c0"/><rect x="91" y="57" width="14" height="7" fill="#3c3c5c"/><rect x="92" y="59" width="12" height="4" fill="#f2efd2"/><rect x="92" y="58" width="12" height="1" fill="#111"/><g stroke="#c6c6c6" stroke-width="1.5" fill="none"><circle cx="129" cy="51.8" r="2.3"/><circle cx="129" cy="61" r="2.3"/><path d="M131 53 L141 60 M131 60 L141 52"/></g><rect x="155.5" y="51.5" width="8" height="10" fill="#f4f4f4" stroke="#cfcfcf"/><rect x="160.5" y="54.5" width="8" height="10" fill="#e6e6e6" stroke="#cfcfcf"/><path d="M162 57.5 H167 M162 59.5 H167 M162 61.5 H167" stroke="#c4c4c4"/><rect x="183" y="52" width="9" height="12" fill="#6a5640"/><rect x="183" y="58" width="9" height="3" fill="#4e3e2c"/><path d="M185 52 Q187.5 49 190 52 Z" fill="#9cc8c8"/><rect x="188.5" y="55.5" width="8" height="9" fill="#fff" stroke="#3c3c6a"/><path d="M190 58.5 H193 M190 60.5 H195 M190 62.5 H195" stroke="#3c3c6a"/><path d="M219 55.5 L225 49.5 V53 Q234 53 233.5 60 Q233 64.5 229 65 Q231.5 62.5 230 59.5 Q228.5 57.5 225 58 V61.5 Z" fill="#4a4a64"/><path d="M242.5 56 H248.5 L245.5 59.5 Z" fill="#000"/><path d="M276 55.5 L270 49.5 V53 Q261 53 261.5 60 Q262 64.5 266 65 Q263.5 62.5 265 59.5 Q266.5 57.5 270 58 V61.5 Z" fill="#c6c6c6"/><path d="M285.5 56 H291.5 L288.5 59.5 Z" fill="#a8a8a8"/><g transform="translate(312,49)"><rect width="16" height="16" fill="#55267a"/><path d="M4 6.3 L5 0.9 L6.4 2.6 Q8.8 0.6 13 0 L9.6 0 Q7.6 1.2 6.2 2.4 Z M5 0.9 L4 6.3 L9.8 5.7 L7.6 3.4 Z" fill="#fff"/><path d="M10 6.8 L9.2 12.2 L7.8 10.5 Q5 12.8 0 13.4 V11.9 Q4 11.2 7 9.2 L4.4 7.4 Z" fill="#fff"/></g><path d="M357.5 51.5 H362 L364 53 V59.5 H357.5 Z" fill="#fff" stroke="#55557a"/><rect x="348" y="57" width="8" height="8" fill="#2a3468"/><rect x="350" y="58" width="4.5" height="3" fill="#fff"/><rect x="351" y="54" width="6" height="2" fill="#c80000"/><path d="M356 52.5 L359.5 55 L356 57.5 Z" fill="#c80000"/><path d="M378.5 51.5 H383 L384.5 53 V59.5 H376.5 V53.5 Z" fill="#fff" stroke="#55557a"/><rect x="384" y="57" width="8" height="8" fill="#2a3468"/><rect x="386" y="58" width="4.5" height="3" fill="#fff"/><rect x="380" y="54" width="6" height="2" fill="#c80000"/><path d="M385 52.5 L388.5 55 L385 57.5 Z" fill="#c80000"/><path d="M404.5 50.5 H413 L416.5 54 V64.5 H404.5 Z" fill="#fff" stroke="#55557a"/><path d="M405 55 H418 L420.5 58.5 L418 62 H405 Z" fill="#1f1f30"/><text x="405.5" y="61" font-size="5.5" font-weight="bold" fill="#fff" font-family="Liberation Sans">PDF</text><rect x="529.5" y="50.5" width="14" height="11" rx="1" fill="#fff" stroke="#55557a"/><rect x="531" y="52" width="11" height="8" fill="#9dd4e0"/><rect x="532" y="64" width="8" height="1" fill="#55557a"/><path d="M536.5 51.5 V60.5 M531.5 56 H541.5" stroke="#1f1f30" stroke-width="1.2"/><path d="M536.5 51 L535 53 H538 Z M536.5 61 L535 59 H538 Z M531 56 L533 54.5 V57.5 Z M542 56 L540 54.5 V57.5 Z" fill="#1f1f30"/><rect x="562.5" y="46.5" width="22" height="22" fill="#fff" stroke="#8a8a8a"/><path d="M565.5 49.5 H580.5 V54 H569.5 V64.5 H565.5 Z" fill="#b6c0da" stroke="#9aa6c6"/><g stroke="#b4b4d0" stroke-width="1"><path d="M593 50.5 H608 M593 53.5 H608 M593 56.5 H600 M593 59.5 H598 M593 62.5 H596 M593.5 50 V64 M596.5 50 V64 M599.5 50 V57 M602.5 50 V56 M605.5 50 V56"/></g><path d="M597 60 Q602.5 54 608.5 60 Q602.5 66 597 60 Z" fill="#fff" stroke="#2a2a3a" stroke-width="1.3"/><circle cx="602.5" cy="59.5" r="2.6" fill="#2a2a3a"/><rect x="618.5" y="46.5" width="22" height="22" fill="#fff" stroke="#8a8a8a"/><path d="M621 55.5 H636 M626.5 50 V65" stroke="#1f1f30" stroke-dasharray="1,1.2"/><path d="M628 61 Q632 57 636.5 61 Q632 65 628 61 Z" fill="#ddd" stroke="#555"/><circle cx="632" cy="60.8" r="1.8" fill="#333"/><path d="M736 56 H742 L739 59.5 Z" fill="#000"/><rect x="763.5" y="50.5" width="14" height="14" fill="#fff" stroke="#555"/><rect x="764" y="51" width="13" height="2" fill="#6a6a8a"/><path d="M765 57 H768 V58 H771 V62.5 H765 Z" fill="#6060a8"/><path d="M771 55.5 H776 V61.5 H771 Z" fill="#fff" stroke="#555"/><g stroke="#585878" stroke-width="1"><path d="M799 52.5 H805 M799 57.5 H805 M799 62.5 H805"/></g><g stroke="#2ea02e" stroke-width="1.4" fill="none"><path d="M794 51.5 L795.5 53.5 L799 49.5 M794 56.5 L795.5 58.5 L799 54.5 M794 61.5 L795.5 63.5 L799 59.5"/></g><rect x="828.5" y="49.5" width="12" height="9" fill="#e0e0ea" stroke="#444"/><rect x="829" y="50" width="12" height="2" fill="#111"/><path d="M832 59 Q834 62 837 59 Q838 63 834.5 65 Q831 63 832 59 Z" fill="#f04010"/><circle cx="834.5" cy="62" r="1.2" fill="#ffd000"/><path d="M852 56 H857.5 L854.7 59.5 Z" fill="#000"/></svg>
<div style="position:absolute;left:116px;top:46px;width:1px;height:22px;background:#cfcfcf"></div>
<div style="position:absolute;left:208px;top:46px;width:1px;height:22px;background:#cfcfcf"></div>
<div style="position:absolute;left:302px;top:46px;width:1px;height:22px;background:#cfcfcf"></div>
<div style="position:absolute;left:338px;top:46px;width:1px;height:22px;background:#cfcfcf"></div>
<div style="position:absolute;left:430px;top:46px;width:1px;height:22px;background:#cfcfcf"></div>
<div style="position:absolute;left:555px;top:46px;width:1px;height:22px;background:#cfcfcf"></div>
<div style="position:absolute;left:647px;top:46px;width:1px;height:22px;background:#cfcfcf"></div>
<div style="position:absolute;left:753px;top:46px;width:1px;height:22px;background:#cfcfcf"></div>
<div style="position:absolute;left:817px;top:46px;width:1px;height:22px;background:#cfcfcf"></div>
<div style="position:absolute;left:437px;top:46px;width:84px;height:23px;background:#fff;border:1px solid #7a7a7a"></div>
<div class="t" style="left:443px;top:52px;font-size:12px;color:#000;transform:scaleX(0.9368);transform-origin:0 0;">62%</div>
<svg style="left:507px;top:54px" width="12" height="8"><path d="M1 1.5 L5 5.5 L9 1.5" stroke="#333" stroke-width="1.1" fill="none"/></svg>
<div class="t" style="left:658px;top:51px;font-size:12px;color:#000;transform:scaleX(0.9717);transform-origin:0 0;">Przyciągaj do</div>
<div style="position:absolute;left:3px;top:81px;width:158px;height:23px;background:#e5e5e5;border:1px solid #bdbdbd"></div>
<div class="t" style="left:7px;top:87px;font-size:12px;color:#000;">A4</div>
<svg style="left:146px;top:89px" width="12" height="8"><path d="M1.5 1.5 L5.5 5.5 L9.5 1.5" stroke="#444" stroke-width="1.1" fill="none"/></svg>
<div style="position:absolute;left:183px;top:76px;width:95px;height:33px;background:#fff;border:1px solid #6f6f6f"></div>
<div style="position:absolute;left:184px;top:92px;width:93px;height:1px;background:#6f6f6f"></div>
<div class="t" style="left:186px;top:80px;font-size:12.3px;color:#000;">210,0 mm</div>
<div class="t" style="left:186px;top:96px;font-size:12.3px;color:#000;">297,0 mm</div>
<div style="position:absolute;left:257px;top:78px;width:9px;height:13px;background:#e8e8e8;border:1px solid #ababab"></div>
<div style="position:absolute;left:267px;top:78px;width:9px;height:13px;background:#e8e8e8;border:1px solid #ababab"></div>
<div style="position:absolute;left:257px;top:94px;width:9px;height:13px;background:#e8e8e8;border:1px solid #ababab"></div>
<div style="position:absolute;left:267px;top:94px;width:9px;height:13px;background:#e8e8e8;border:1px solid #ababab"></div>
<svg style="left:257px;top:76px" width="20" height="33"><path d="M2 7 H7 L4.5 10 Z M12 10 H17 L14.5 7 Z M2 23 H7 L4.5 26 Z M12 26 H17 L14.5 23 Z" fill="#000"/></svg>
<svg style="left:0;top:72px" width="900" height="40">
<path d="M170.5 5 V8 M178.5 5 V8 M170.5 6.5 H178.5" stroke="#2a2a3a"/><rect x="170.5" y="9.5" width="8" height="9" fill="#fff" stroke="#4a4a66"/><rect x="171" y="14" width="7" height="4" fill="#dfe0ea"/>
<path d="M169.5 24 V33 M168 25.5 L169.5 23.5 L171 25.5 M168 31.5 L169.5 33.5 L171 31.5" stroke="#2a2a3a" fill="none"/><rect x="172.5" y="23.5" width="8" height="9" fill="#fff" stroke="#4a4a66"/><rect x="173" y="28" width="7" height="4" fill="#dfe0ea"/>
<rect x="291.5" y="9.5" width="22" height="22" fill="#fff" stroke="#8f8f8f"/><rect x="297.5" y="13.5" width="9" height="13" fill="#fff" stroke="#4a4a66"/><rect x="298" y="20" width="8" height="6" fill="#dfe0ea"/>
<rect x="323.5" y="17.5" width="13" height="9" fill="#fff" stroke="#4a4a66"/><rect x="324" y="22" width="12" height="4" fill="#dfe0ea"/>
<rect x="355.5" y="9.5" width="22" height="22" fill="#fff" stroke="#8f8f8f"/><rect x="358.5" y="12.5" width="6" height="9" fill="#fff" stroke="#4a4a66"/><rect x="363.5" y="15.5" width="6" height="9" fill="#fff" stroke="#4a4a66"/><rect x="368.5" y="18.5" width="6" height="9" fill="#fff" stroke="#4a4a66"/><rect x="369" y="23" width="5" height="4" fill="#dfe0ea"/>
<rect x="386.5" y="16.5" width="3" height="11" fill="#fff" stroke="#4a4a66"/><rect x="391.5" y="21.5" width="5" height="6" fill="#fff" stroke="#4a4a66"/><rect x="398.5" y="19.5" width="3" height="8" fill="#fff" stroke="#4a4a66"/>
</svg>
<div style="position:absolute;left:284px;top:76px;width:1px;height:32px;background:#cfcfcf"></div>
<div style="position:absolute;left:348px;top:76px;width:1px;height:32px;background:#cfcfcf"></div>
<div style="position:absolute;left:412px;top:76px;width:1px;height:32px;background:#cfcfcf"></div>
<div class="t" style="left:421px;top:87px;font-size:12px;color:#000;transform:scaleX(0.9439);transform-origin:0 0;">Jednostki:</div>
<div style="position:absolute;left:475px;top:81px;width:90px;height:23px;background:#e1e1e1;border:1px solid #adadad"></div>
<div class="t" style="left:479px;top:87px;font-size:12px;color:#000;transform:scaleX(1.0626);transform-origin:0 0;">milimetry</div>
<svg style="left:551px;top:89px" width="12" height="8"><path d="M1.5 1.5 L5.5 5.5 L9.5 1.5" stroke="#444" stroke-width="1.1" fill="none"/></svg>
<div style="position:absolute;left:571px;top:76px;width:1px;height:32px;background:#cfcfcf"></div>
<svg style="left:580px;top:85px" width="16" height="16"><path d="M7 0.5 L4 3.5 H10 Z M7 14.5 L4 11.5 H10 Z M0.5 7.5 L3.5 4.5 V10.5 Z M14 7.5 L11 4.5 V10.5 Z" fill="#1f1f30"/><rect x="4.5" y="5" width="5" height="5" fill="#fff" stroke="#4a4a66"/></svg>
<div style="position:absolute;left:598px;top:81px;width:78px;height:23px;background:#fff;border:1px solid #6a6a6a"></div>
<div class="t" style="left:601px;top:87.2px;font-size:12.3px;color:#000;transform:scaleX(0.9632);transform-origin:0 0;">0,1 mm</div>
<div style="position:absolute;left:657px;top:83px;width:17px;height:19px;background:#e8e8e8;border:1px solid #ababab"></div>
<div style="position:absolute;left:658px;top:92px;width:15px;height:1px;background:#ababab"></div>
<svg style="left:657px;top:83px" width="17" height="20"><path d="M5.5 6.5 H11.5 L8.5 3 Z M5.5 12 H11.5 L8.5 15.5 Z" fill="#000"/></svg>
<div style="position:absolute;left:682px;top:76px;width:1px;height:32px;background:#cfcfcf"></div>
<svg style="left:690px;top:77px" width="16" height="32">
<path d="M1.5 1.5 H5.5 V8.5 H1.5 Z M4.5 3.5 H8.5 V10.5 H4.5 Z" fill="#fff" stroke="#3a3a56"/><rect x="2" y="5" width="3" height="3" fill="#dfe0ea"/><path d="M8.5 8.5 L14 14 M14 8.5 L8.5 14" stroke="#1f1f30" stroke-width="1.3"/>
<path d="M1.5 17.5 H5.5 V24.5 H1.5 Z M4.5 19.5 H8.5 V26.5 H4.5 Z" fill="#fff" stroke="#3a3a56"/><path d="M8.5 24 L11 27.5 L14 24 M11 27.5 V31" stroke="#1f1f30" stroke-width="1.3" fill="none"/>
</svg>
<div style="position:absolute;left:706px;top:76px;width:95px;height:33px;background:#fff;border:1px solid #6f6f6f"></div>
<div style="position:absolute;left:707px;top:92px;width:93px;height:1px;background:#6f6f6f"></div>
<div class="t" style="left:709.5px;top:79.5px;font-size:12.3px;color:#000;transform:scaleX(0.9461);transform-origin:0 0;">5,0 mm</div>
<div class="t" style="left:709.5px;top:95.5px;font-size:12.3px;color:#000;transform:scaleX(0.9461);transform-origin:0 0;">5,0 mm</div>
<div style="position:absolute;left:780px;top:78px;width:9px;height:13px;background:#e8e8e8;border:1px solid #ababab"></div>
<div style="position:absolute;left:790px;top:78px;width:9px;height:13px;background:#e8e8e8;border:1px solid #ababab"></div>
<div style="position:absolute;left:780px;top:94px;width:9px;height:13px;background:#e8e8e8;border:1px solid #ababab"></div>
<div style="position:absolute;left:790px;top:94px;width:9px;height:13px;background:#e8e8e8;border:1px solid #ababab"></div>
<svg style="left:780px;top:76px" width="20" height="33"><path d="M2 7 H7 L4.5 10 Z M12 10 H17 L14.5 7 Z M2 23 H7 L4.5 26 Z M12 26 H17 L14.5 23 Z" fill="#000"/></svg>
<div style="position:absolute;left:807px;top:76px;width:1px;height:32px;background:#cfcfcf"></div>
<svg style="left:814px;top:81px" width="24" height="24"><rect x="0.5" y="0.5" width="22" height="22" fill="#fff" stroke="#8f8f8f"/><rect x="5.5" y="5.5" width="10" height="10" fill="#e6e6ee" stroke="#2a2a40" stroke-dasharray="2,1"/><path d="M13 11 V20 L15 18 L17 21 L18 20.5 L16.5 17.5 H19 Z" fill="#fff" stroke="#333" stroke-width="0.8"/></svg>
<div style="position:absolute;left:843px;top:76px;width:1px;height:32px;background:#cfcfcf"></div>
<svg style="left:858px;top:83px" width="20" height="20"><circle cx="9.5" cy="9.5" r="8.5" fill="none" stroke="#c4c4c4" stroke-width="1.3"/><path d="M9.5 4 V15 M4 9.5 H15" stroke="#c4c4c4" stroke-width="1.8"/></svg>
<svg style="left:0;top:0" width="30" height="700"><rect x="4.5" y="116.5" width="22" height="22" fill="#fff" stroke="#9a9a9a"/><path d="M12 119.5 L19.5 127 H16.5 L18.5 132 L16.5 133 L14.5 128 L12 130.5 Z" fill="#eeeef6" stroke="#5a5a80" stroke-width="1"/><path d="M20 137 L25 132 V137 Z" fill="#000"/><path d="M12 148 Q9 156 13 165" stroke="#6a6a8a" fill="none" stroke-width="1"/><rect x="9.5" y="151.5" width="4" height="4" fill="#fff" stroke="#333"/><path d="M13.5 153.5 L21 158 L16.5 162 Z" fill="#2a2a40"/><path d="M20 165 L25 160 V165 Z" fill="#000"/><rect x="4" y="173" width="22" height="1" fill="#d6d6d6"/><path d="M8 187.5 H20 M11.5 184 V198 M11 194.5 H22 M18.5 187 V201 M11 195 L21 185" stroke="#3a3a56" stroke-width="1.8"/><path d="M20 201 L25 196 V201 Z" fill="#000"/><circle cx="13.5" cy="219" r="5.8" fill="#fff" stroke="#3a3a56" stroke-width="1.2"/><path d="M8 220 H19 A5.8 5.8 0 0 1 8 220Z" fill="#c8c8d8"/><path d="M17.5 223 L23 228.5" stroke="#2a2a40" stroke-width="2.2"/><path d="M20 229 L25 224 V229 Z" fill="#000"/><rect x="4" y="237" width="22" height="1" fill="#d6d6d6"/><path d="M8 251 H14 M11 248 V254" stroke="#5a5a7a" stroke-width="1.2"/><path d="M10 257 L12 254 L15 259 L17 255 L19 259 L21 256" stroke="#4a4a6a" stroke-width="1.4" fill="none"/><path d="M20 264 L25 259 V264 Z" fill="#000"/><path d="M9 283 Q11 279 14 282 Q17 287 20 284 Q22 281 19 280 Q16 281 17 285 Q19 290 22 287" stroke="#3a3a56" stroke-width="2" fill="none"/><rect x="9.5" y="306.5" width="12" height="11" fill="#fff" stroke="#4a4a6a"/><rect x="10" y="312" width="11" height="5" fill="#dcdce8"/><path d="M20 321 L25 316 V321 Z" fill="#000"/><circle cx="15" cy="340" r="5.8" fill="#fff" stroke="#4a4a6a"/><path d="M9.3 341 H20.7 A5.8 5.8 0 0 1 9.3 341Z" fill="#dcdce8"/><path d="M20 349 L25 344 V349 Z" fill="#000"/><path d="M11.5 362.5 H19 L22 368 L19 373.5 H11.5 L8.5 368 Z" fill="#fff" stroke="#4a4a6a"/><path d="M9.5 369 H21 L18.7 373 H11.7 Z" fill="#dcdce8"/><path d="M20 377 L25 372 V377 Z" fill="#000"/><rect x="4" y="385" width="22" height="1" fill="#d6d6d6"/><path d="M8.5 410.5 L13.5 396.5 H16.5 L21.5 410.5 H18 L17 407.5 H13 L12 410.5 Z M14 404.5 H16 L15 400.5 Z" fill="#f0f0f6" stroke="#6a6a88" stroke-width="1"/><path d="M20 413 L25 408 V413 Z" fill="#000"/><rect x="4" y="421" width="22" height="1" fill="#d6d6d6"/><path d="M10 445 L21 434 M8.5 442.5 L12.5 446.5 M18.5 432.5 L22.5 436.5" stroke="#2a2a40" stroke-width="1.5"/><path d="M10 445 L13 440 L15 442 Z M21 434 L16 437 L18 439 Z" fill="#2a2a40"/><path d="M20 449 L25 444 V449 Z" fill="#000"/><path d="M12 462 L18 472" stroke="#4a4a6a" stroke-width="1"/><rect x="10" y="459" width="4.5" height="4.5" fill="#f57c00" stroke="#6a6a88" stroke-width="0.8"/><rect x="15.5" y="470" width="4.5" height="4.5" fill="#f57c00" stroke="#6a6a88" stroke-width="0.8"/><path d="M20 477 L25 472 V477 Z" fill="#000"/><rect x="4" y="485" width="22" height="1" fill="#d6d6d6"/><rect x="11" y="501" width="10" height="9" fill="#9a9ab6"/><rect x="8.5" y="498.5" width="10" height="9" fill="#fff" stroke="#4a4a6a"/><rect x="9" y="503" width="9" height="4" fill="#dcdce8"/><path d="M20 513 L25 508 V513 Z" fill="#000"/><path d="M8 530 L11 533 M9.5 531.5 L13 528" stroke="#6a6a88" stroke-width="1.2"/><path d="M12 523.5 H18 L16.5 528.5 H12.5 Z" fill="#fff" stroke="#5a5a7a" stroke-width="1"/><path d="M16 530 L22.5 539 H16 Z" fill="#5a5a7a"/><rect x="4" y="549" width="22" height="1" fill="#d6d6d6"/><rect x="7" y="567" width="8" height="8" fill="#f57c00"/><rect x="8" y="568" width="3" height="3" fill="#ffb060"/><rect x="11" y="571" width="3" height="3" fill="#ffb060"/><path d="M11 572 L19 564" stroke="#7aa0a8" stroke-width="2"/><path d="M17 562 L21 566 M18 561 Q21 558 23 560 Q24 563 21 565" stroke="#1f1f30" stroke-width="2.5" fill="#1f1f30"/><path d="M20 577 L25 572 V577 Z" fill="#000"/><path d="M9 592 L13 588 L17 592 L13 596 Z" fill="#fff" stroke="#3a3a56" stroke-width="1.2"/><path d="M10 593 L13 596 L16 593 Z" fill="#f57c00"/><path d="M13 603 L17 595 L21 603 Z" fill="#f5b830"/><path d="M20 605 L25 600 V605 Z" fill="#000"/><path d="M8 618 L12 614 L16 618 L12 622 Z" fill="#fff" stroke="#3a3a56" stroke-width="1.2"/><path d="M9 619 L12 622 L15 619 Z" fill="#f57c00"/><rect x="13.5" y="622.5" width="7" height="6" fill="none" stroke="#3a3a56" stroke-width="1.2"/><rect x="16.5" y="625.5" width="6" height="5" fill="#fff" stroke="#3a3a56" stroke-width="1.2"/><rect x="14" y="623" width="2" height="5" fill="#f57c00"/><rect x="4" y="641" width="22" height="1" fill="#d6d6d6"/><circle cx="15" cy="666" r="7.8" fill="none" stroke="#c8c8c8" stroke-width="1.2"/><path d="M15 661 V671 M10 666 H20" stroke="#c8c8c8" stroke-width="1.6"/></svg>
<div style="position:absolute;left:1624px;top:113px;width:6px;height:932px;background:#fcfcfc"></div>
<div style="position:absolute;left:1624px;top:133px;width:1px;height:912px;background:#f3f3f3"></div>
<div style="position:absolute;left:1627px;top:115px;width:1px;height:930px;background:#dcdcdc"></div>
<div style="position:absolute;left:1630px;top:113px;width:271px;height:932px;background:#f3f3f3"></div>
<div style="position:absolute;left:1630px;top:113px;width:271px;height:19px;background:#ebebeb"></div>
<div style="position:absolute;left:1630px;top:132px;width:251px;height:1px;background:#c8c8c8"></div>
<div class="t" style="left:1632px;top:117px;font-size:12px;color:#000;transform:scaleX(0.9994);transform-origin:0 0;">Menedżer obiektów</div>
<svg style="left:1868px;top:115px" width="32" height="14"><path d="M3 2 L7 6 L3 10 Z M8 2 L12 6 L8 10 Z" fill="#bdbdbd"/><path d="M20 3 L27 10 M27 3 L20 10" stroke="#b0b0b0" stroke-width="1.3"/></svg>
<svg style="left:1629px;top:0" width="252" height="1045"><g transform="translate(3,136)"><rect x="5.5" y="8.5" width="3.5" height="3.5" fill="#e8e8f0" stroke="#7a7aa0" stroke-width="0.8"/><path d="M6 10 L7.3 11.4 L10.2 7.8" stroke="#22aa22" stroke-width="1.4" fill="none"/><rect x="5.5" y="14.5" width="3.5" height="3.5" fill="#e8e8f0" stroke="#7a7aa0" stroke-width="0.8"/><path d="M6 16 L7.3 17.4 L10.2 13.8" stroke="#22aa22" stroke-width="1.4" fill="none"/><rect x="5.5" y="20.5" width="3.5" height="3.5" fill="#e8e8f0" stroke="#7a7aa0" stroke-width="0.8"/><path d="M6 22 L7.3 23.4 L10.2 19.8" stroke="#22aa22" stroke-width="1.4" fill="none"/><path d="M11.5 13 L15 8.5 H20.5 L17 13 Z" fill="#dfe3f0" stroke="#6a7aaa" stroke-width="1"/><path d="M11.5 18 L15 13.5 H20.5 L17 18 Z" fill="#dfe3f0" stroke="#6a7aaa" stroke-width="1"/><path d="M11.5 23 L15 18.5 H20.5 L17 23 Z" fill="#dfe3f0" stroke="#6a7aaa" stroke-width="1"/></g><rect x="33.5" y="141.5" width="22" height="22" fill="#fff" stroke="#9a9a9a"/><g transform="translate(33,141)"><path d="M3.5 3.5 H8.5 L13.5 10.5 H8.5 Z" fill="#e6e8f2" stroke="#7a88b4" stroke-width="0.9"/><path d="M3.5 6.5 H8.5 L13.5 13.5 H8.5 Z" fill="#e6e8f2" stroke="#7a88b4" stroke-width="0.9"/><path d="M3.5 9.5 H8.5 L13.5 16.5 H8.5 Z" fill="#e6e8f2" stroke="#7a88b4" stroke-width="0.9"/><path d="M10.5 10 L15.5 3.5 L19 7 L13.5 13 Z" fill="#26263c"/><path d="M7.5 14 L10.5 10 L13.5 13 L9 15.5 Z" fill="#fff" stroke="#26263c" stroke-width="0.9"/></g><g transform="translate(63,136)"><path d="M1.5 9 L2.5 8 V13 M1 16.5 Q2.5 14.5 3.2 16 Q3 17.5 1 19 H3.3 M1 21.5 H3 L2 23 Q3.5 23 3.2 24.5 Q2.5 25.5 1 25" stroke="#6a80b0" stroke-width="0.9" fill="none"/><path d="M5.5 14 L9 9.5 H15.5 L12 14 Z" fill="#dfe3f0" stroke="#6a7aaa" stroke-width="1"/><path d="M5.5 19 L9 14.5 H15.5 L12 19 Z" fill="#dfe3f0" stroke="#6a7aaa" stroke-width="1"/><path d="M5.5 24 L9 19.5 H15.5 L12 24 Z" fill="#dfe3f0" stroke="#6a7aaa" stroke-width="1"/><path d="M6.5 12 Q10 7 15 9 Q11 13 6.5 12 Z" fill="#3a3a50" stroke="#8a8aa0" stroke-width="0.7"/><circle cx="11" cy="10.5" r="1" fill="#ddd"/></g><path d="M76 162 L81 157 V162 Z" fill="#000"/></svg>
<div class="t" style="left:1727px;top:139px;font-size:12px;color:#000;transform:scaleX(0.9258);transform-origin:0 0;">Strona 1</div>
<div class="t" style="left:1727px;top:154px;font-size:12px;color:#000;transform:scaleX(0.9425);transform-origin:0 0;">Warstwa 1</div>
<svg style="left:1861px;top:142px" width="8" height="10"><path d="M1 1 L6 5 L1 9 Z" fill="#000"/></svg>
<div style="position:absolute;left:1634px;top:170px;width:241px;height:839px;background:#fff;border:1px solid #6a6a6a"></div>
<svg style="left:0;top:0" width="1880" height="1045"><rect x="1635" y="171" width="239" height="18" fill="#d9e5f1"/><rect x="1635" y="187" width="239" height="2" fill="#b4c0cc"/><rect x="1635" y="171" width="239" height="1" fill="#c8ced6"/><rect x="1635" y="315" width="239" height="18" fill="#d9e5f1"/><rect x="1635" y="331" width="239" height="2" fill="#b4c0cc"/><rect x="1635" y="315" width="239" height="1" fill="#c8ced6"/><rect x="1635" y="207" width="239" height="1" fill="#d6d6d6"/><rect x="1635" y="351" width="239" height="1" fill="#d6d6d6"/><rect x="1635" y="369" width="239" height="1" fill="#d6d6d6"/><rect x="1635" y="333" width="239" height="1" fill="#d6d6d6"/><path d="M1640 172.5 H1647.5 V184.5 H1637.5 V175 Z" fill="#f4f8f8" stroke="#8a9a9a"/><rect x="1638" y="179" width="9" height="5" fill="#c4e6dc"/><path d="M1648.5 174 V185.5 H1639" stroke="#1e1e40" stroke-width="1.2" fill="none"/><path d="M1640 316.5 H1647.5 V328.5 H1637.5 V319 Z" fill="#f4f8f8" stroke="#8a9a9a"/><rect x="1638" y="323" width="9" height="5" fill="#c4e6dc"/><path d="M1648.5 318 V329.5 H1639" stroke="#1e1e40" stroke-width="1.2" fill="none"/><path d="M1656.5 198 Q1662.5 192 1668.5 198 Q1662.5 204 1656.5 198 Z" fill="#fff" stroke="#8a8aa0" stroke-width="0.9"/><ellipse cx="1662.5" cy="197.5" rx="3.5" ry="2.8" fill="#3a3a50"/><circle cx="1661.5" cy="196.5" r="1" fill="#ddd"/><rect x="1671.5" y="197.5" width="12" height="6" fill="#e4e4ea" stroke="#9a9aac" stroke-width="0.8"/><circle cx="1677" cy="196.5" r="4.6" fill="none" stroke="#e00000" stroke-width="1.6"/><path d="M1674 199.5 L1680 193.5" stroke="#e00000" stroke-width="1.6"/><path d="M1688 203.5 L1689 200 L1696.5 192.5 L1699 195 L1691.5 202.5 Z" fill="#5a5a70"/><path d="M1688 203.5 L1689 200.5 L1691 202.5 Z" fill="#c8c8d0"/><rect x="1700" y="191" width="15" height="12" fill="#0000ff"/><rect x="1639.5" y="211.5" width="8" height="8" fill="#fff" stroke="#2a2a40"/><path d="M1641.5 215.5 H1645.5" stroke="#2a2a40"/><path d="M1656.5 216 Q1662.5 210 1668.5 216 Q1662.5 222 1656.5 216 Z" fill="#fff" stroke="#8a8aa0" stroke-width="0.9"/><ellipse cx="1662.5" cy="215.5" rx="3.5" ry="2.8" fill="#3a3a50"/><circle cx="1661.5" cy="214.5" r="1" fill="#ddd"/><rect x="1674.5" y="209.5" width="6" height="5" fill="#fff" stroke="#aaa" stroke-width="0.8"/><rect x="1671.5" y="214.5" width="12" height="6.5" fill="#e8e8ee" stroke="#8a8a9a" stroke-width="0.8"/><rect x="1672" y="215" width="11" height="1.5" fill="#333"/><path d="M1688 221.5 L1689 218 L1696.5 210.5 L1699 213 L1691.5 220.5 Z" fill="#5a5a70"/><path d="M1688 221.5 L1689 218.5 L1691 220.5 Z" fill="#c8c8d0"/><rect x="1700" y="209" width="15" height="12" fill="#141414"/><rect x="1658.5" y="229.5" width="8" height="8" fill="#fff" stroke="#2a2a40"/><path d="M1660.5 233.5 H1664.5" stroke="#2a2a40"/><path d="M1676 238.5 V237 Q1676 233.5 1680 233 H1682 Q1685.5 232.5 1685.5 229 V227" stroke="#000" stroke-width="3.4" fill="none" stroke-linecap="square"/><path d="M1676 238.5 V237 Q1676 233.5 1680 233 H1682 Q1685.5 232.5 1685.5 229 V227" stroke="#e0208a" stroke-width="1.5" fill="none"/><rect x="1658.5" y="265.5" width="8" height="8" fill="#fff" stroke="#2a2a40"/><path d="M1660.5 269.5 H1664.5" stroke="#2a2a40"/><path d="M1676 274.5 V273 Q1676 269.5 1680 269 H1682 Q1685.5 268.5 1685.5 265 V263" stroke="#000" stroke-width="3.4" fill="none" stroke-linecap="square"/><path d="M1676 274.5 V273 Q1676 269.5 1680 269 H1682 Q1685.5 268.5 1685.5 265 V263" stroke="#3a2a9a" stroke-width="1.5" fill="none"/><rect x="1658.5" y="301.5" width="8" height="8" fill="#fff" stroke="#2a2a40"/><path d="M1660.5 305.5 H1664.5" stroke="#2a2a40"/><path d="M1662.5 303.5 V307.5" stroke="#2a2a40"/><rect x="1673.5" y="297.5" width="15" height="15" fill="#fff" stroke="#c8c8c8"/><rect x="1677.5" y="300.5" width="7" height="4" fill="#fff" stroke="#2a2a40"/><rect x="1675.5" y="302.5" width="6" height="6" fill="#fff" stroke="#2a2a40"/><circle cx="1683" cy="308" r="3.5" fill="#9a9acc" stroke="#2a2a40" stroke-width="0.8"/><path d="M1656.5 342 Q1662.5 336 1668.5 342 Q1662.5 348 1656.5 342 Z" fill="#fff" stroke="#8a8aa0" stroke-width="0.9"/><ellipse cx="1662.5" cy="341.5" rx="3.5" ry="2.8" fill="#3a3a50"/><circle cx="1661.5" cy="340.5" r="1" fill="#ddd"/><rect x="1671.5" y="341.5" width="12" height="6" fill="#e4e4ea" stroke="#9a9aac" stroke-width="0.8"/><circle cx="1677" cy="340.5" r="4.6" fill="none" stroke="#e00000" stroke-width="1.6"/><path d="M1674 343.5 L1680 337.5" stroke="#e00000" stroke-width="1.6"/><path d="M1688 347.5 L1689 344 L1696.5 336.5 L1699 339 L1691.5 346.5 Z" fill="#5a5a70"/><path d="M1688 347.5 L1689 344.5 L1691 346.5 Z" fill="#c8c8d0"/><rect x="1700" y="335" width="15" height="12" fill="#0000ff"/><path d="M1656.5 360 Q1662.5 354 1668.5 360 Q1662.5 366 1656.5 360 Z" fill="#fff" stroke="#8a8aa0" stroke-width="0.9"/><ellipse cx="1662.5" cy="359.5" rx="3.5" ry="2.8" fill="#3a3a50"/><circle cx="1661.5" cy="358.5" r="1" fill="#ddd"/><rect x="1671.5" y="359.5" width="12" height="6" fill="#e4e4ea" stroke="#9a9aac" stroke-width="0.8"/><circle cx="1677" cy="358.5" r="4.6" fill="none" stroke="#e00000" stroke-width="1.6"/><path d="M1674 361.5 L1680 355.5" stroke="#e00000" stroke-width="1.6"/><path d="M1688 365.5 L1689 362 L1696.5 354.5 L1699 357 L1691.5 364.5 Z" fill="#5a5a70"/><path d="M1688 365.5 L1689 362.5 L1691 364.5 Z" fill="#c8c8d0"/><rect x="1700" y="353" width="15" height="12" fill="#141414"/><ellipse cx="1662.5" cy="379" rx="6" ry="3.5" fill="#c8c8d4" stroke="#6a6a80" stroke-width="0.8"/><rect x="1671.5" y="377.5" width="12" height="6" fill="#e4e4ea" stroke="#9a9aac" stroke-width="0.8"/><circle cx="1677" cy="376.5" r="4.6" fill="none" stroke="#e00000" stroke-width="1.6"/><path d="M1674 379.5 L1680 373.5" stroke="#e00000" stroke-width="1.6"/><path d="M1688 383.5 L1689 380 L1696.5 372.5 L1699 375 L1691.5 382.5 Z" fill="#5a5a70"/><path d="M1688 383.5 L1689 380.5 L1691 382.5 Z" fill="#c8c8d0"/><circle cx="1694" cy="377.5" r="4.6" fill="none" stroke="#e00000" stroke-width="1.6"/><path d="M1691 380.5 L1697 374.5" stroke="#e00000" stroke-width="1.6"/><rect x="1700" y="371" width="15" height="12" fill="#c0c0c0"/><rect x="1635" y="992" width="239" height="15" fill="#f0f0f0"/><rect x="1669" y="992" width="188" height="15" fill="#cdcdcd"/><path d="M1646 995.5 L1642 999.5 L1646 1003.5" stroke="#333" stroke-width="1.6" fill="none"/><path d="M1864 995.5 L1868 999.5 L1864 1003.5" stroke="#333" stroke-width="1.6" fill="none"/><path d="M1640.5 1021.5 L1644.5 1026.5 H1651.5 L1647.5 1021.5 Z" fill="#d8dcec" stroke="#6a78a8" stroke-width="0.9"/><path d="M1640.5 1025.5 L1644.5 1030.5 H1651.5 L1647.5 1025.5 Z" fill="#d8dcec" stroke="#6a78a8" stroke-width="0.9"/><path d="M1640.5 1029.5 L1644.5 1034.5 H1651.5 L1647.5 1029.5 Z" fill="#d8dcec" stroke="#6a78a8" stroke-width="0.9"/><circle cx="1649" cy="1020.5" r="3.3" fill="#1a9a1a"/><path d="M1668.5 1021.5 L1672.5 1026.5 H1679.5 L1675.5 1021.5 Z" fill="#d8dcec" stroke="#6a78a8" stroke-width="0.9"/><path d="M1668.5 1025.5 L1672.5 1030.5 H1679.5 L1675.5 1025.5 Z" fill="#d8dcec" stroke="#6a78a8" stroke-width="0.9"/><path d="M1668.5 1029.5 L1672.5 1034.5 H1679.5 L1675.5 1029.5 Z" fill="#d8dcec" stroke="#6a78a8" stroke-width="0.9"/><text x="1665" y="1023" font-size="6" fill="#6a78a8" font-family="Liberation Sans" font-weight="bold">1</text><text x="1665" y="1028" font-size="6" fill="#6a78a8" font-family="Liberation Sans" font-weight="bold">2</text><text x="1665" y="1033" font-size="6" fill="#6a78a8" font-family="Liberation Sans" font-weight="bold">3</text><circle cx="1677" cy="1020.5" r="3.3" fill="#1a9a1a"/><path d="M1671 1027 L1674 1024 H1677 L1675 1028 Z" fill="#f07820"/><path d="M1696.5 1021.5 L1700.5 1026.5 H1707.5 L1703.5 1021.5 Z" fill="#d8dcec" stroke="#6a78a8" stroke-width="0.9"/><path d="M1696.5 1025.5 L1700.5 1030.5 H1707.5 L1703.5 1025.5 Z" fill="#d8dcec" stroke="#6a78a8" stroke-width="0.9"/><path d="M1696.5 1029.5 L1700.5 1034.5 H1707.5 L1703.5 1029.5 Z" fill="#d8dcec" stroke="#6a78a8" stroke-width="0.9"/><text x="1693" y="1023" font-size="6" fill="#6a78a8" font-family="Liberation Sans" font-weight="bold">1</text><text x="1693" y="1028" font-size="6" fill="#6a78a8" font-family="Liberation Sans" font-weight="bold">3</text><text x="1693" y="1033" font-size="6" fill="#6a78a8" font-family="Liberation Sans" font-weight="bold">5</text><circle cx="1705" cy="1020.5" r="3.3" fill="#1a9a1a"/><path d="M1699 1027 L1702 1024 H1705 L1703 1028 Z" fill="#f07820"/><path d="M1724.5 1021.5 L1728.5 1026.5 H1735.5 L1731.5 1021.5 Z" fill="#e8e8e8" stroke="#c8c8c8" stroke-width="0.9"/><path d="M1724.5 1025.5 L1728.5 1030.5 H1735.5 L1731.5 1025.5 Z" fill="#e8e8e8" stroke="#c8c8c8" stroke-width="0.9"/><path d="M1724.5 1029.5 L1728.5 1034.5 H1735.5 L1731.5 1029.5 Z" fill="#e8e8e8" stroke="#c8c8c8" stroke-width="0.9"/><text x="1721" y="1023" font-size="6" fill="#c8c8c8" font-family="Liberation Sans" font-weight="bold">2</text><text x="1721" y="1028" font-size="6" fill="#c8c8c8" font-family="Liberation Sans" font-weight="bold">4</text><text x="1721" y="1033" font-size="6" fill="#c8c8c8" font-family="Liberation Sans" font-weight="bold">6</text><path d="M1851.5 1020.5 H1863.5 M1855 1020.5 V1018.5 H1860 V1020.5 M1852.5 1021.5 L1853.5 1032.5 H1861.5 L1862.5 1021.5 M1855.5 1024 V1030 M1859.5 1024 V1030" stroke="#c8c8c8" stroke-width="1.1" fill="none"/></svg>
<div class="t" style="left:1654px;top:174px;font-size:12px;color:#000;transform:scaleX(0.9581);transform-origin:0 0;font-weight:bold">Strona 1</div>
<div class="t" style="left:1722px;top:192px;font-size:12px;color:#000;transform:scaleX(0.9649);transform-origin:0 0;font-style:italic">Prowadnice</div>
<div class="t" style="left:1722px;top:210px;font-size:12px;color:#ff0000;transform:scaleX(0.9845);transform-origin:0 0;font-weight:bold">Warstwa 1</div>
<div class="t" style="left:1692.5px;top:228px;font-size:12px;color:#000;transform:scaleX(0.9457);transform-origin:0 0;">Krzywa na Warstwa 1&nbsp;&nbsp;(soczewka)</div>
<div class="t" style="left:1711.3px;top:246px;font-size:12px;color:#000;transform:scaleX(0.9300);transform-origin:0 0;">soczewka</div>
<div class="t" style="left:1692.5px;top:264px;font-size:12px;color:#000;transform:scaleX(0.9457);transform-origin:0 0;">Krzywa na Warstwa 1&nbsp;&nbsp;(soczewka)</div>
<div class="t" style="left:1711.3px;top:282px;font-size:12px;color:#000;transform:scaleX(0.9300);transform-origin:0 0;">soczewka</div>
<div class="t" style="left:1692.5px;top:300px;font-size:12px;color:#000;transform:scaleX(0.9634);transform-origin:0 0;">Grupa 26 obiektów na Warstwa 1</div>
<div class="t" style="left:1654px;top:318px;font-size:12px;color:#000;transform:scaleX(0.9798);transform-origin:0 0;font-weight:bold">Strona główna</div>
<div class="a" style="left:1722px;top:333px;width:152px;height:18px;overflow:hidden">
<div class="t" style="left:0px;top:3px;font-size:12px;color:#1a3fcc;transform:scaleX(0.9729);transform-origin:0 0;font-style:italic">Prowadnice (wszystkie strony)</div>
</div>
<div class="t" style="left:1722px;top:354px;font-size:12px;color:#1a3fcc;transform:scaleX(1.0327);transform-origin:0 0;font-style:italic">Pulpit</div>
<div class="t" style="left:1722px;top:372px;font-size:12px;color:#1a3fcc;transform:scaleX(0.9890);transform-origin:0 0;font-style:italic">Siatka dokumentu</div>
<div style="position:absolute;left:1881px;top:133px;width:1px;height:912px;background:#16a4ec"></div>
<div style="position:absolute;left:1882px;top:133px;width:19px;height:912px;background:#e8e8e8"></div>
<div style="position:absolute;left:1882px;top:133px;width:19px;height:146px;background:#cfe4f8"></div>
<div style="position:absolute;left:1882px;top:280px;width:19px;height:109px;background:#d9d9d9"></div>
<div style="position:absolute;left:1882px;top:390px;width:19px;height:115px;background:#d9d9d9"></div>
<div style="position:absolute;left:1882px;top:506px;width:19px;height:94px;background:#d9d9d9"></div>
<div style="position:absolute;left:1901px;top:113px;width:1px;height:932px;background:#d0d0d0"></div>
<div class="t" style="left:1897px;top:157px;font-size:12px;color:#000;transform-origin:0 0;transform:rotate(90deg)">Menedżer obiektów</div>
<div class="t" style="left:1897px;top:304px;font-size:12px;color:#000;transform-origin:0 0;transform:rotate(90deg)">Złącz krzywe</div>
<div class="t" style="left:1897px;top:414px;font-size:12px;color:#000;transform-origin:0 0;transform:rotate(90deg)">Kształtowanie</div>
<div class="t" style="left:1897px;top:530px;font-size:12px;color:#000;transform-origin:0 0;transform:rotate(90deg)">Soczewka</div>
<svg style="left:1882px;top:0" width="19" height="700"><circle cx="4" cy="139" r="1.8" fill="none" stroke="#2a2a40" stroke-width="0.9"/><rect x="8.5" y="136.5" width="4" height="4" fill="#fff" stroke="#2a2a40" stroke-width="0.9"/><path d="M4 141 V151" stroke="#2a2a40" stroke-dasharray="1,1"/><path d="M9 142 V150" stroke="#2a2a40" stroke-dasharray="1,1"/><rect x="12.5" y="141.5" width="3" height="3" fill="#fff" stroke="#2a2a40" stroke-width="0.8"/><rect x="12.5" y="145.5" width="3" height="3" fill="#fff" stroke="#2a2a40" stroke-width="0.8"/><rect x="12.5" y="149" width="3" height="2.5" fill="#fff" stroke="#2a2a40" stroke-width="0.8"/><path d="M4 287 Q9.5 279 15 287" stroke="#3a8ae0" stroke-width="1" stroke-dasharray="1,0.8" fill="none"/><circle cx="4.5" cy="288" r="1.6" fill="#fff" stroke="#3a3a50"/><circle cx="14.5" cy="288" r="1.6" fill="#fff" stroke="#3a3a50"/><path d="M4.5 290 V296 M14.5 290 V296" stroke="#3a3a50" stroke-width="1.2"/><rect x="2.6" y="395.7" width="8" height="8" fill="#fff" stroke="#4a4a5e" stroke-width="1.1"/><rect x="7.6" y="400.7" width="8" height="8" fill="#fff" stroke="#4a4a5e" stroke-width="1.1"/><rect x="8.2" y="401.3" width="1.8" height="1.8" fill="#e0e0ee"/><circle cx="9.5" cy="517.2" r="6.4" fill="#5a5a72"/><circle cx="9.5" cy="517.2" r="6.4" fill="none" stroke="#a8a8bc" stroke-width="0.6"/><circle cx="9.5" cy="516.3" r="5.3" fill="#fff"/><path d="M4.2 517 H14.8 A5.3 5.3 0 0 1 4.2 517 Z" fill="#e2e2ea"/><circle cx="9.5" cy="626" r="7.8" fill="none" stroke="#c8c8c8" stroke-width="1.2"/><path d="M9.5 621 V631 M4.5 626 H14.5" stroke="#c8c8c8" stroke-width="1.6"/></svg>
<div style="position:absolute;left:1902px;top:113px;width:18px;height:932px;background:#f3f3f3"></div>
<svg style="left:1902px;top:0" width="18" height="1045"><path d="M3 118 H5 M7 118 H9 M11 118 H13" stroke="#9a9a9a" stroke-width="1"/><path d="M6 123 L12 127.5 L6 132 Z" fill="#000"/><path d="M4 149 L10 143 M9 139 L13 143 M10 140 Q13 136 15 138 Q16 141 13 143" stroke="#c4c4c4" stroke-width="2" fill="none"/><path d="M5 159 L9 155 L13 159" stroke="#c8c8c8" stroke-width="1.2" fill="none"/><rect x="0.5" y="166.5" width="17" height="16" fill="#fff" stroke="#555"/><path d="M2 168 L16 181 M16 168 L2 181" stroke="#000" stroke-width="0.9"/><rect x="0" y="183" width="18" height="17" fill="#5a5a5a"/><rect x="1" y="184" width="17" height="16" fill="#151515"/><rect x="0" y="200" width="18" height="17" fill="#5a5a5a"/><rect x="1" y="201" width="17" height="16" fill="#2f2f2f"/><rect x="0" y="217" width="18" height="17" fill="#5a5a5a"/><rect x="1" y="218" width="17" height="16" fill="#494949"/><rect x="0" y="234" width="18" height="17" fill="#5a5a5a"/><rect x="1" y="235" width="17" height="16" fill="#626262"/><rect x="0" y="251" width="18" height="17" fill="#5a5a5a"/><rect x="1" y="252" width="17" height="16" fill="#7b7b7b"/><rect x="0" y="268" width="18" height="17" fill="#5a5a5a"/><rect x="1" y="269" width="17" height="16" fill="#949494"/><rect x="0" y="285" width="18" height="17" fill="#5a5a5a"/><rect x="1" y="286" width="17" height="16" fill="#aaaaaa"/><rect x="0" y="302" width="18" height="17" fill="#5a5a5a"/><rect x="1" y="303" width="17" height="16" fill="#bfbfbf"/><rect x="0" y="319" width="18" height="17" fill="#5a5a5a"/><rect x="1" y="320" width="17" height="16" fill="#d4d4d4"/><rect x="0" y="336" width="18" height="17" fill="#5a5a5a"/><rect x="1" y="337" width="17" height="16" fill="#ebebeb"/><rect x="0" y="353" width="18" height="17" fill="#5a5a5a"/><rect x="1" y="354" width="17" height="16" fill="#ffffff"/><rect x="0" y="370" width="18" height="17" fill="#5a5a5a"/><rect x="1" y="371" width="17" height="16" fill="#3c2b91"/><rect x="0" y="387" width="18" height="17" fill="#5a5a5a"/><rect x="1" y="388" width="17" height="16" fill="#00a0d6"/><rect x="0" y="404" width="18" height="17" fill="#5a5a5a"/><rect x="1" y="405" width="17" height="16" fill="#00a55a"/><rect x="0" y="421" width="18" height="17" fill="#5a5a5a"/><rect x="1" y="422" width="17" height="16" fill="#fde300"/><rect x="0" y="438" width="18" height="17" fill="#5a5a5a"/><rect x="1" y="439" width="17" height="16" fill="#df2a1f"/><rect x="0" y="455" width="18" height="17" fill="#5a5a5a"/><rect x="1" y="456" width="17" height="16" fill="#e2007f"/><rect x="0" y="472" width="18" height="17" fill="#5a5a5a"/><rect x="1" y="473" width="17" height="16" fill="#a9468f"/><rect x="0" y="489" width="18" height="17" fill="#5a5a5a"/><rect x="1" y="490" width="17" height="16" fill="#f48020"/><rect x="0" y="506" width="18" height="17" fill="#5a5a5a"/><rect x="1" y="507" width="17" height="16" fill="#fdb8bd"/><rect x="0" y="523" width="18" height="17" fill="#5a5a5a"/><rect x="1" y="524" width="17" height="16" fill="#7b6d67"/><rect x="0" y="540" width="18" height="17" fill="#5a5a5a"/><rect x="1" y="541" width="17" height="16" fill="#dcd8f2"/><rect x="0" y="557" width="18" height="17" fill="#5a5a5a"/><rect x="1" y="558" width="17" height="16" fill="#b1a6dc"/><rect x="0" y="574" width="18" height="17" fill="#5a5a5a"/><rect x="1" y="575" width="17" height="16" fill="#7a9bd2"/><rect x="0" y="591" width="18" height="17" fill="#5a5a5a"/><rect x="1" y="592" width="17" height="16" fill="#8870c2"/><rect x="0" y="608" width="18" height="17" fill="#5a5a5a"/><rect x="1" y="609" width="17" height="16" fill="#9990b8"/><rect x="0" y="625" width="18" height="17" fill="#5a5a5a"/><rect x="1" y="626" width="17" height="16" fill="#4d6089"/><rect x="0" y="642" width="18" height="17" fill="#5a5a5a"/><rect x="1" y="643" width="17" height="16" fill="#564c6a"/><rect x="0" y="659" width="18" height="17" fill="#5a5a5a"/><rect x="1" y="660" width="17" height="16" fill="#6b7f96"/><rect x="0" y="676" width="18" height="17" fill="#5a5a5a"/><rect x="1" y="677" width="17" height="16" fill="#0094cf"/><rect x="0" y="693" width="18" height="17" fill="#5a5a5a"/><rect x="1" y="694" width="17" height="16" fill="#a9dcf3"/><rect x="0" y="710" width="18" height="17" fill="#5a5a5a"/><rect x="1" y="711" width="17" height="16" fill="#b5c7d3"/><rect x="0" y="727" width="18" height="17" fill="#5a5a5a"/><rect x="1" y="728" width="17" height="16" fill="#93a3aa"/><rect x="0" y="744" width="18" height="17" fill="#5a5a5a"/><rect x="1" y="745" width="17" height="16" fill="#6b7378"/><rect x="0" y="761" width="18" height="17" fill="#5a5a5a"/><rect x="1" y="762" width="17" height="16" fill="#3d4548"/><rect x="0" y="778" width="18" height="17" fill="#5a5a5a"/><rect x="1" y="779" width="17" height="16" fill="#4d655f"/><rect x="0" y="795" width="18" height="17" fill="#5a5a5a"/><rect x="1" y="796" width="17" height="16" fill="#3f8877"/><rect x="0" y="812" width="18" height="17" fill="#5a5a5a"/><rect x="1" y="813" width="17" height="16" fill="#6c9893"/><rect x="0" y="829" width="18" height="17" fill="#5a5a5a"/><rect x="1" y="830" width="17" height="16" fill="#57a995"/><rect x="0" y="846" width="18" height="17" fill="#5a5a5a"/><rect x="1" y="847" width="17" height="16" fill="#5aa274"/><rect x="0" y="863" width="18" height="17" fill="#5a5a5a"/><rect x="1" y="864" width="17" height="16" fill="#7dd2dc"/><rect x="0" y="880" width="18" height="17" fill="#5a5a5a"/><rect x="1" y="881" width="17" height="16" fill="#5aabb6"/><rect x="0" y="897" width="18" height="17" fill="#5a5a5a"/><rect x="1" y="898" width="17" height="16" fill="#bacbbd"/><rect x="0" y="914" width="18" height="17" fill="#5a5a5a"/><rect x="1" y="915" width="17" height="16" fill="#ddf5df"/><rect x="0" y="931" width="18" height="17" fill="#5a5a5a"/><rect x="1" y="932" width="17" height="16" fill="#b4e8b9"/><rect x="0" y="948" width="18" height="17" fill="#5a5a5a"/><rect x="1" y="949" width="17" height="16" fill="#909c8e"/><rect x="0" y="965" width="18" height="17" fill="#5a5a5a"/><rect x="1" y="966" width="17" height="16" fill="#8f9a75"/><rect x="0" y="982" width="18" height="17" fill="#5a5a5a"/><rect x="1" y="983" width="17" height="16" fill="#c2c57c"/><rect x="0" y="999" width="18" height="7" fill="#5a5a5a"/><rect x="1" y="1000" width="17" height="6" fill="#b8c98c"/><path d="M5 1012 L9 1016 L13 1012" stroke="#c0c0c0" stroke-width="1.3" fill="none"/><path d="M5 1026 L8 1029 L5 1032 M9 1026 L12 1029 L9 1032" stroke="#c0c0c0" stroke-width="1" fill="none"/></svg>
<div style="position:absolute;left:1607px;top:152px;width:17px;height:855px;background:#fff"></div>
<div style="position:absolute;left:1607px;top:152px;width:17px;height:17px;background:#f0f0f0"></div>
<div style="position:absolute;left:1607px;top:990px;width:17px;height:17px;background:#f0f0f0"></div>
<div style="position:absolute;left:1608px;top:361px;width:15px;height:445px;background:#cdcdcd"></div>
<svg style="left:1607px;top:152px" width="17" height="855"><path d="M4.5 10.5 L8.5 6.5 L12.5 10.5" stroke="#444" stroke-width="1.8" fill="none"/><path d="M4.5 844 L8.5 848 L12.5 844" stroke="#444" stroke-width="1.8" fill="none"/></svg>
<div style="position:absolute;left:49px;top:1008px;width:1575px;height:17px;background:#f3f3f3"></div>
<div style="position:absolute;left:48px;top:1008px;width:1px;height:16px;background:#7f7f7f"></div>
<svg style="left:0;top:1000px" width="1630" height="50"><path d="M52.5 9.5 H57.5 L61.5 13.5 V20.5 H52.5 Z" fill="#fff" stroke="#000"/><path d="M57.5 10 V13.5 H61" stroke="#000" fill="none"/><path d="M54 16.5 H60 M57 13.5 V19.5" stroke="#000" stroke-width="1"/><path d="M192.5 9.5 H197.5 L201.5 13.5 V20.5 H192.5 Z" fill="#fff" stroke="#000"/><path d="M197.5 10 V13.5 H201" stroke="#000" fill="none"/><path d="M194 16.5 H200 M197 13.5 V19.5" stroke="#000" stroke-width="1"/><path d="M70.5 11 V20 M78 11 L72 15.5 L78 20 Z" fill="#8a8a8a" stroke="#8a8a8a"/><path d="M94 11 L88.5 15.5 L94 20 Z" fill="#8a8a8a"/><path d="M161 11 L166.5 15.5 L161 20 Z" fill="#8a8a8a"/><path d="M176 11 L182 15.5 L176 20 Z M183.5 11 V20" fill="#8a8a8a" stroke="#8a8a8a"/><path d="M206.5 25 V9.5 H275 L280.5 15 V25" fill="#fff" stroke="#a0a0a0"/><path d="M833.5 21 L835 19.5 M833.5 16 L835 14.5 M833.5 11 L835 9.5" stroke="#9a9a9a" stroke-width="1.2"/><path d="M838.5 25 V9.5 H853" stroke="#8a8a8a" fill="none"/><rect x="839" y="8" width="17" height="15" fill="#f0f0f0"/><path d="M849 12 L845 15.5 L849 19" stroke="#333" stroke-width="1.8" fill="none"/><rect x="856" y="8" width="735" height="15" fill="#cdcdcd"/><rect x="1590" y="8" width="17" height="15" fill="#f0f0f0"/><path d="M1596 12 L1600 15.5 L1596 19" stroke="#333" stroke-width="1.8" fill="none"/><rect x="1607" y="8" width="17" height="15" fill="#fff"/><circle cx="1615" cy="15" r="4.8" fill="none" stroke="#3a3a56" stroke-width="1"/><path d="M1615 12 L1617.5 15 L1615 18 L1612.5 15 Z" fill="none" stroke="#3a3a56" stroke-width="0.8"/><path d="M1618.5 18.5 L1621.5 21.5" stroke="#2a2a40" stroke-width="1.8"/></svg>
<div class="t" style="left:115.8px;top:1011px;font-size:12px;color:#000;transform:scaleX(0.8226);transform-origin:0 0;">1 z 1</div>
<div class="t" style="left:221.2px;top:1009px;font-size:12px;color:#000;transform:scaleX(0.9258);transform-origin:0 0;">Strona 1</div>
<div style="position:absolute;left:30px;top:1025px;width:1594px;height:19px;background:#f3f3f3"></div>
<div style="position:absolute;left:0px;top:1044px;width:1920px;height:1px;background:#dadada"></div>
<svg style="left:0;top:1020px" width="1630" height="25"><path d="M35 9 V10 M35 13 V14 M35 17 V18" stroke="#a0a0a0" stroke-width="1.2"/><path d="M42 10 L47 14.5 L42 19 Z" fill="#000"/><path d="M54.5 20.5 L60.5 14.5" stroke="#5a9090" stroke-width="2"/><path d="M58.5 12 L63 16.5" stroke="#22223a" stroke-width="2"/><circle cx="63.5" cy="11.5" r="2.6" fill="#22223a"/><path d="M76 11 L72 15 L76 19" stroke="#c8c8c8" stroke-width="1.2" fill="none"/><rect x="83.5" y="6.5" width="17" height="17" fill="#fff" stroke="#555"/><path d="M85 8 L99 22 M99 8 L85 22" stroke="#000" stroke-width="0.9"/><rect x="100" y="6" width="18" height="18" fill="#555"/><rect x="101" y="7" width="16" height="16" fill="#e2007f"/><rect x="117" y="6" width="18" height="18" fill="#555"/><rect x="118" y="7" width="16" height="16" fill="#00a0d6"/><rect x="134" y="6" width="18" height="18" fill="#555"/><rect x="135" y="7" width="16" height="16" fill="#3c2b91"/><rect x="151" y="6" width="18" height="18" fill="#555"/><rect x="152" y="7" width="16" height="16" fill="#333333"/><rect x="168" y="6" width="18" height="18" fill="#555"/><rect x="169" y="7" width="16" height="16" fill="#ffffff"/><path d="M1592 11 L1596 15 L1592 19" stroke="#c8c8c8" stroke-width="1.5" fill="none"/><path d="M1608 12 L1611 15 L1608 18 M1612 12 L1615 15 L1612 18" stroke="#b0b0b0" stroke-width="0.9" fill="none"/></svg>
<div style="position:absolute;left:1624px;top:1025px;width:4px;height:19px;background:#f3f3f3"></div>
<div style="position:absolute;left:30px;top:1025px;width:1598px;height:1px;background:#dcdcdc"></div>
<div style="position:absolute;left:0px;top:1045px;width:1920px;height:33px;background:#f3f3f3"></div>
<div style="position:absolute;left:0px;top:1077px;width:1920px;height:1px;background:#fff"></div>
<div style="position:absolute;left:0px;top:1078px;width:1920px;height:2px;background:#000"></div>
<div style="position:absolute;left:441px;top:1078px;width:48px;height:2px;background:#333"></div>
<div class="t" style="left:5.5px;top:1056px;font-size:12px;color:#000;transform:scaleX(0.8928);transform-origin:0 0;">( 200,838; 161,380 )</div>
<svg style="left:0;top:1040px" width="1920" height="40"><rect x="112.5" y="14.5" width="13" height="14" fill="#fff" stroke="#000"/><path d="M117 17.5 L122 21.5 L117 25.5 Z" fill="#000"/><rect x="1466.5" y="14.5" width="14" height="12" rx="1" fill="#fff" stroke="#5a5a80"/><rect x="1468" y="16" width="11" height="3" fill="#c89494"/><rect x="1468" y="19" width="11" height="3" fill="#5e8e5e"/><rect x="1468" y="22" width="11" height="3.5" fill="#80a4d4"/><circle cx="1473.5" cy="20.3" r="2.9" fill="#fff"/><circle cx="1473.5" cy="20.3" r="1.7" fill="none" stroke="#22223a" stroke-width="1.1"/><rect x="1469" y="28" width="9" height="1" fill="#5a5a80"/><path d="M1501 14.5 L1507 20.5 L1501 28 L1495.5 20.5 Z" fill="#fff" stroke="#4a4a6e" stroke-width="1.2"/><path d="M1496.5 20.5 H1505.8 L1501 27 Z" fill="#f08a10"/><path d="M1500 13.5 L1501 15 L1502.5 13.5 M1501 15 V19.5" stroke="#4a4a6e" stroke-width="0.9" fill="none"/><path d="M1506.5 19.5 L1509 21 V27" stroke="#f08a10" stroke-width="1.6" fill="none"/><rect x="1516.5" y="12.5" width="17" height="17" fill="#fff" stroke="#9a9a9a"/><path d="M1517 13 L1533 29 M1533 13 L1517 29" stroke="#000" stroke-width="1"/><rect x="1698" y="10" width="1" height="22" fill="#d8d8d8"/><path d="M1710.5 14.5 H1713.5 L1715.5 22 L1713 26 H1710 L1707.8 22 Z" fill="#eeeef4" stroke="#5a5a78" stroke-width="1.1"/><path d="M1708 28 H1716" stroke="#1e1e36" stroke-width="2"/><path d="M1712 17 V21" stroke="#8a8aa8" stroke-width="1"/><circle cx="1712" cy="22" r="0.9" fill="#4a4a66"/><rect x="1725.5" y="12.5" width="17" height="17" fill="#151515" stroke="#8a8a8a"/></svg>
<div class="t" style="left:1537.3px;top:1056px;font-size:12px;color:#000;transform:scaleX(0.9322);transform-origin:0 0;">Brak</div>
<div class="t" style="left:1746px;top:1056px;font-size:12px;color:#000;transform:scaleX(0.9383);transform-origin:0 0;">C:0 M:0 Y:0 K:100&nbsp;&nbsp;0,200 mm</div></body></html>
